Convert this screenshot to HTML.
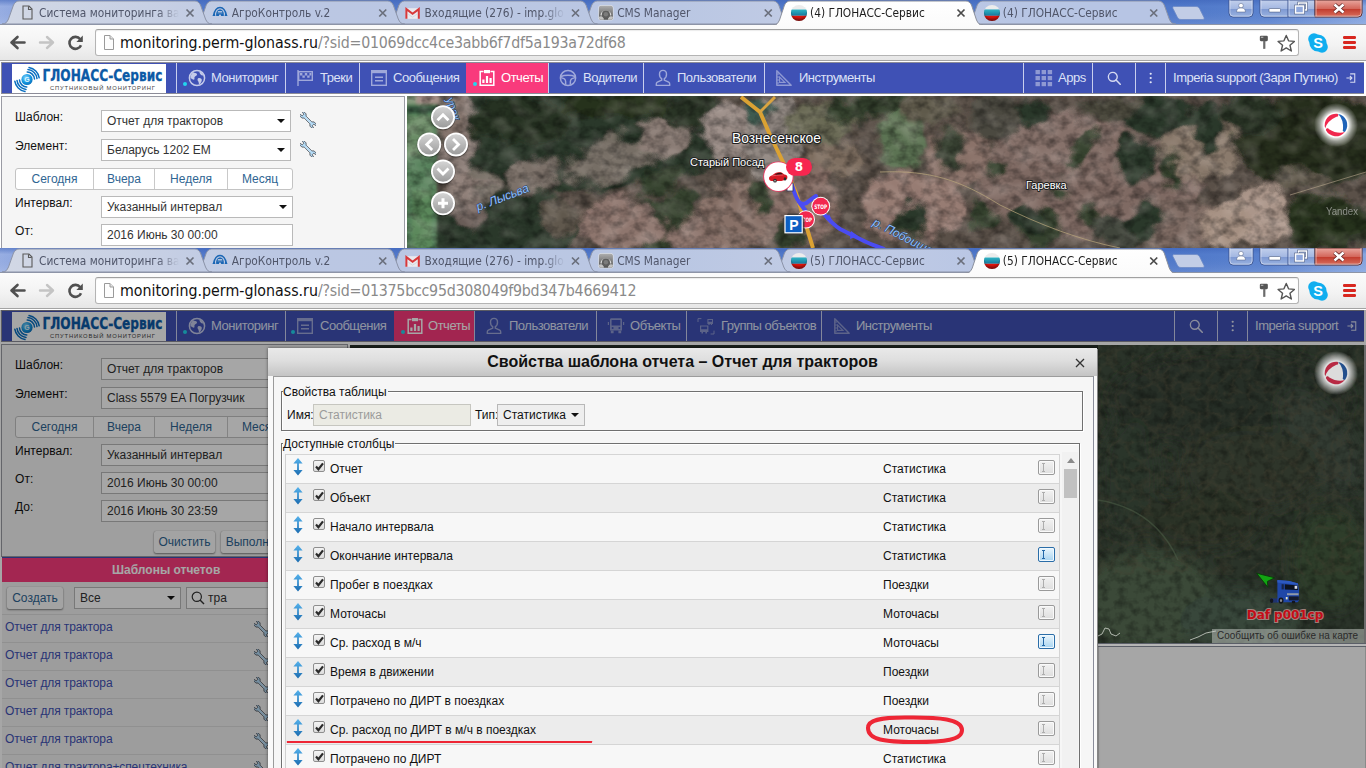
<!DOCTYPE html><html lang="ru"><head><meta charset="utf-8"><title>ГЛОНАСС-Сервис</title><style>

html,body{margin:0;padding:0}
body{width:1366px;height:768px;overflow:hidden;position:relative;background:#fff;font-family:"Liberation Sans",sans-serif}
.ph{position:absolute;left:2px;top:247px;width:403px;height:25px;line-height:24px;background:#fb3b7d;border-top:1px solid #3f51b5;color:#fff;font-weight:bold;font-size:12px;box-sizing:border-box;text-align:left;padding-left:110px}
.ptb{position:absolute;left:2px;top:272px;width:403px;height:32px;background:#f2f2f2}
.pl{position:absolute;left:2px;top:304px;width:403px;height:160px;background:#f2f2f2}
.li{position:absolute;left:0;width:403px;height:28px;line-height:25px;border-top:1px solid #dedede;box-sizing:border-box;padding-left:3px;color:#3f51b5;font-size:12px;letter-spacing:-.12px;white-space:nowrap}
.ovl{position:absolute;left:0;top:0;width:1366px;height:458px;background:rgba(0,0,0,.35)}
.gray2{position:absolute;left:1098px;top:333px;width:268px;height:125px;background:#a6a6a6;border-top:1px solid #5b5f68;box-sizing:border-box}
.gray2::before{content:"";position:absolute;left:0;top:0;width:268px;height:2px;background:#b5b5b5;border-bottom:1px solid #5b5f68}
.gray2::after{content:"";position:absolute;left:0;top:3px;width:266px;height:130px;border-left:1px solid #909090;border-right:1px solid #8a8a8a}

.win{position:absolute;left:0;width:1366px;height:61px;}
.tabstrip{position:absolute;left:0;top:0;display:block}
.tt{position:absolute;top:5px;height:17px;line-height:17px;font-family:"DejaVu Sans Condensed","DejaVu Sans","Liberation Sans",sans-serif;font-size:11.8px;color:#50566a;white-space:nowrap;overflow:hidden;-webkit-mask-image:linear-gradient(90deg,#000 calc(100% - 22px),transparent);mask-image:linear-gradient(90deg,#000 calc(100% - 22px),transparent)}
.tt.act{color:#1c1c1c}
.tbar{position:absolute;left:0;top:25px;width:1366px;height:35px;background:linear-gradient(#fbfbfb,#f3f3f3 55%,#e6e6e6);border-bottom:1px solid #a3a3a3}
.navb{position:absolute;left:0;top:0}
.url{position:absolute;left:95px;top:4px;width:1202px;height:25px;border:1px solid #b4b4b4;border-top-color:#a0a0a0;border-radius:3px;background:#fff;box-shadow:inset 0 1px 1px rgba(0,0,0,.08)}
.url .pg{position:absolute;left:7px;top:5px}
.url .ut{position:absolute;left:24px;top:0;line-height:25.5px;font-family:"DejaVu Sans Condensed","DejaVu Sans",sans-serif;font-size:15.8px;white-space:nowrap;color:#111}
.url .ur{color:#8a8a8a;letter-spacing:-.24px}
.url .key{position:absolute;left:1163px;top:5px}
.url .star{position:absolute;left:1180.5px;top:3.5px}
.skype{position:absolute;left:1307px;top:7px}
.hamb{position:absolute;left:1343px;top:11px;width:13px}
.hamb i{display:block;height:2.6px;margin-bottom:2.4px;background:#d8271f;border-radius:1.2px}

.app{position:absolute;left:0;width:1366px;background:#fff;overflow:hidden;font-family:"Liberation Sans",sans-serif;font-size:12px;color:#222}
.nav{position:absolute;left:1px;top:0;width:1362px;height:30px;border:1px solid #8c8c98;border-right:none;background:#3f51b5}
.logo{position:absolute;left:10px;top:1px;width:154px;height:29px;background:#fff;overflow:hidden}
.ni{position:absolute;top:0;height:30px;border-left:1px solid #c9cfee;box-sizing:border-box}
.ni.act{background:#f93a7c;border-left-color:#f93a7c}
.ni .ic{position:absolute;top:0;height:30px;display:flex;align-items:center;line-height:0}
.ni .lb{position:absolute;top:0;line-height:30px;font-size:13px;color:#dde1f6;white-space:nowrap;letter-spacing:-.48px}
.ni.act .lb{color:#fff}
.ni .dot{position:absolute;top:19px;width:4px;height:4px;border-radius:2px;background:#23d6ee}
.panel{position:absolute;left:1px;width:404px;border:1px solid #9a9ba4;background:#f5f5f5;box-sizing:border-box}
.lbl{position:absolute;left:13px;height:18px;line-height:18px;font-size:12px;letter-spacing:.06px;color:#111}
.sel{position:absolute;left:99px;height:20px;line-height:20px;border:1px solid #b9b9b9;background:#fff;padding-left:5px;font-size:12px;color:#333;white-space:nowrap;box-sizing:content-box;width:183px}
.sel b{position:absolute;right:5px;top:8px;border:4px solid transparent;border-top:4.5px solid #111;border-bottom:none}
.wr{position:absolute;left:298px}
.bg{position:absolute;left:13px;top:71px;height:20px;border:1px solid #c3c3c3;border-radius:3px;background:#fff;overflow:hidden;white-space:nowrap;font-size:0}
.bg span{display:inline-block;height:20px;line-height:21px;text-align:center;font-size:12px;color:#2f6592;border-left:1px solid #c9c9c9;box-sizing:border-box}
.bg span:first-child{border-left:none}
.btn{position:absolute;height:22px;line-height:22px;text-align:center;font-size:12px;color:#2f6592;background:#fafafa;border-radius:2px;box-shadow:0 1px 2px rgba(0,0,0,.45),0 0 1px rgba(0,0,0,.3)}

.map1{position:absolute;left:407px;top:34px;display:block}
.map2{position:absolute;left:1098px;top:35px;display:block}

.dlg{position:absolute;left:268px;top:38px;width:829px;height:430px;background:#f9f9f9;font-family:"Liberation Sans",sans-serif;font-size:12px;color:#111;box-shadow:0 0 3px rgba(0,0,0,.5)}
.dt{position:absolute;left:0;top:0;width:829px;height:28px;line-height:27px;text-align:center;font-weight:bold;font-size:16px;color:#111;background:linear-gradient(#e9e9e9,#dedede 45%,#c4c4c4);}
.dx{position:absolute;left:807px;top:10px}
.db{position:absolute;left:5px;top:28px;width:819px;height:402px;background:#f6f6f6;border-top:1px solid #9c9c9c;border-left:1px solid #9a9a9a;border-right:1px solid #8a8d9a}
.fs{position:absolute;border:1px solid #707070;box-shadow:inset 1px 1px 0 #fff, 1px 1px 0 #fff;box-sizing:border-box}
.fs>*{transform:translate(1px,1px)}
.fs1{left:7px;top:14px;width:802px;height:40px}
.fs2{left:7px;top:66px;width:799px;height:340px}
.lg{position:absolute;left:0px;top:-9px;height:16px;line-height:16px;background:#f6f6f6;padding:0 1px 0 0;font-size:12px;white-space:nowrap}
.fl{position:absolute;top:12px;line-height:20px;font-size:12px}
.fi{position:absolute;left:30px;top:11px;width:151px;height:20px;line-height:20px;padding-left:5px;background:#ebebe4;border:1px solid #c6c6c0;color:#9b9b9b;font-size:12px;box-sizing:content-box}
.fsel{position:absolute;left:214px;top:11px;width:81px;height:20px;line-height:20px;padding-left:5px;background:#eeeeee;border:1px solid #b8b8b8;font-size:12px;box-sizing:content-box}
.fsel b{position:absolute;right:5px;top:8px;border:4px solid transparent;border-top:4.5px solid #111;border-bottom:none}
.tbl{position:absolute;left:2px;top:9px;width:775px;height:330px;overflow:hidden}
.tbl::after{content:"";position:absolute;left:0;top:0;width:1px;height:100%;background:#d0d0d0}
.rw{position:absolute;left:0;width:775px;border-right:1px solid #d4d4d4;height:29px;background:#f7f7f7;border-top:1px solid #d5d5d5;box-sizing:border-box}
.rw.alt{background:#ececec}
.rw .ar{position:absolute;left:7px;top:2px}
.ck{position:absolute;left:28px;top:5px;width:10px;height:10px;border:1px solid #8e8e8e;border-radius:2px;background:linear-gradient(#f4f4f4,#dcdcdc);line-height:0}
.ck svg{position:absolute;left:1px;top:1px}
.c1{position:absolute;left:45px;top:0;line-height:29px;white-space:nowrap}
.c2{position:absolute;left:598px;top:0;line-height:29px;white-space:nowrap}
.ib{position:absolute;left:753.4px;top:4.6px;width:15px;height:13px;border-radius:2.5px;border:1px solid #9a9a9a;border-radius:2px;background:linear-gradient(#f2f2f2,#dedede);box-shadow:inset 0 0 0 1px #fafafa}
.ib i{position:absolute;left:2.5px;top:2.5px;width:3px;height:6.5px;border-top:1px solid #adadad;border-bottom:1px solid #adadad;background:linear-gradient(90deg,transparent 1px,#adadad 1px,#adadad 2px,transparent 2px)}
.ib.hl{border-color:#2a6da8;background:linear-gradient(#eaf6fd,#a8d4f0);box-shadow:inset 0 0 0 1px #f0f9ff}
.ib.hl i{border-color:#2368a8;background:linear-gradient(90deg,transparent 1px,#2368a8 1px,#2368a8 2px,transparent 2px)}
.sb{position:absolute;left:779px;top:7px;width:16px;height:332px;background:#f1f1f1}
.sb .up{position:absolute;left:4.5px;top:6px;border:4px solid transparent;border-bottom:5px solid #8a8a8a;border-top:none}
.sb .th{position:absolute;left:2px;top:17px;width:13px;height:29px;background:#c1c1c1}
.ann{position:absolute;left:0;top:0;pointer-events:none}

</style></head><body>
<div class="win" style="top:0px">
<svg class="tabstrip" width="1366" height="25" viewBox="0 0 1366 25">
<defs><linearGradient id="abg" x1="0" x2="1" y1="0" y2="0"><stop offset="0" stop-color="#98aee2"/><stop offset="0.012" stop-color="#90a8e0"/><stop offset="0.15" stop-color="#5278c9"/><stop offset="0.86" stop-color="#4f78c9"/><stop offset="0.93" stop-color="#5a82cf"/><stop offset="1" stop-color="#86a5df"/></linearGradient><linearGradient id="abgv" x1="0" x2="0" y1="0" y2="1"><stop offset="0" stop-color="#3c62b8" stop-opacity=".55"/><stop offset=".25" stop-color="#3c62b8" stop-opacity="0"/><stop offset="1" stop-color="#fff" stop-opacity=".12"/></linearGradient><linearGradient id="ati" gradientUnits="userSpaceOnUse" x1="0" x2="1366" y1="0" y2="0"><stop offset="0" stop-color="#d2d8e5"/><stop offset=".12" stop-color="#c6cfe4"/><stop offset=".2" stop-color="#bbc7e3"/><stop offset=".5" stop-color="#bac7e3"/><stop offset=".6" stop-color="#c2cce5"/><stop offset=".75" stop-color="#b7c5e4"/><stop offset="1" stop-color="#b7c5e4"/></linearGradient><linearGradient id="ata" x1="0" x2="0" y1="0" y2="1"><stop offset="0" stop-color="#ffffff"/><stop offset="1" stop-color="#fbfbfb"/></linearGradient><linearGradient id="awb" x1="0" x2="0" y1="0" y2="1"><stop offset="0" stop-color="#c3d0ec"/><stop offset=".5" stop-color="#a4b8e2"/><stop offset=".52" stop-color="#7d98d2"/><stop offset="1" stop-color="#9bb3e0"/></linearGradient><linearGradient id="awc" x1="0" x2="0" y1="0" y2="1"><stop offset="0" stop-color="#e9a79f"/><stop offset=".5" stop-color="#d4685c"/><stop offset=".52" stop-color="#c13a2c"/><stop offset="1" stop-color="#d8705f"/></linearGradient></defs>
<rect width="1366" height="25" fill="url(#abg)"/><rect width="1366" height="25" fill="url(#abgv)"/>
<rect y="24" width="1366" height="1" fill="#8e95a6"/>
<path d="M965.75,24 C969.75,24 970.75,22 972.25,19 L977.25,5 C978.75,2.5 980.25,1 982.75,1 L1158.75,1 C1161.25,1 1162.75,2.5 1164.25,5 L1169.25,19 C1170.75,22 1171.75,24 1175.75,24 Z" fill="url(#ati)" stroke="#8b93a8" stroke-width="1"/>
<path d="M580.25,24 C584.25,24 585.25,22 586.75,19 L591.75,5 C593.25,2.5 594.75,1 597.25,1 L773.25,1 C775.75,1 777.25,2.5 778.75,5 L783.75,19 C785.25,22 786.25,24 790.25,24 Z" fill="url(#ati)" stroke="#8b93a8" stroke-width="1"/>
<path d="M387.5,24 C391.5,24 392.5,22 394.0,19 L399.0,5 C400.5,2.5 402.0,1 404.5,1 L580.5,1 C583.0,1 584.5,2.5 586.0,5 L591.0,19 C592.5,22 593.5,24 597.5,24 Z" fill="url(#ati)" stroke="#8b93a8" stroke-width="1"/>
<path d="M194.75,24 C198.75,24 199.75,22 201.25,19 L206.25,5 C207.75,2.5 209.25,1 211.75,1 L387.75,1 C390.25,1 391.75,2.5 393.25,5 L398.25,19 C399.75,22 400.75,24 404.75,24 Z" fill="url(#ati)" stroke="#8b93a8" stroke-width="1"/>
<path d="M2.0,24 C6.0,24 7.0,22 8.5,19 L13.5,5 C15.0,2.5 16.5,1 19.0,1 L195.0,1 C197.5,1 199.0,2.5 200.5,5 L205.5,19 C207.0,22 208.0,24 212.0,24 Z" fill="url(#ati)" stroke="#8b93a8" stroke-width="1"/>
<path d="M773.0,25 C777.0,25 778.0,23 779.5,20 L784.5,5 C786.0,2.5 787.5,1 790.0,1 L966.0,1 C968.5,1 970.0,2.5 971.5,5 L976.5,20 C978.0,23 979.0,25 983.0,25 Z" fill="url(#ata)" stroke="#8a8f9c" stroke-width="1"/>
<rect x="777.0" y="24" width="202" height="1.2" fill="#fbfbfb"/>
<g transform="translate(21.5,5.5)"><path d="M1.5,0.5 H7.5 L10.5,3.5 V13.5 H1.5 Z" fill="none" stroke="#5a5a5a" stroke-width="1.1"/><path d="M7,0.8 V4 H10.2" fill="none" stroke="#5a5a5a" stroke-width="1.1"/></g>
<path d="M186.5,9.5 l7,7 M193.5,9.5 l-7,7" stroke="#6a6f7c" stroke-width="1.7" fill="none"/>
<g transform="translate(212,4)"><path d="M1.6,11.4 C2.6,6.4 4.8,3.4 8,3.4 C11.2,3.4 13.4,6.4 14.4,11.4" fill="none" stroke="#1a66b4" stroke-width="1.5"/><path d="M0.2,12 L2.8,9.6 L3.4,12 Z M15.8,12 L13.200,9.6 L12.600,12 Z" fill="#1a66b4"/><path d="M4.200,12 C3.800,8.200 5.400,5.600 8,5.600 C10.600,5.600 12.200,8.200 11.800,12 L9.200,12 L8.600,10.600 L7.400,10.600 L6.800,12 Z" fill="#1a66b4"/><path d="M5.800,7.700 h4.400" stroke="#c9d2e6" stroke-width="1.100"/><path d="M5.600,9.100 C7,8.700 9,8.700 10.400,9.100" stroke="#c9d2e6" stroke-width=".5" fill="none"/></g>
<path d="M379.25,9.5 l7,7 M386.25,9.5 l-7,7" stroke="#6a6f7c" stroke-width="1.7" fill="none"/>
<g transform="translate(405.3,7.8)"><rect x="0.6" y="0.4" width="13.4" height="10.6" fill="#e9e9ee"/><path d="M3,6.500 L7.300,9.400 L11.600,6.500" fill="none" stroke="#d0d0d8" stroke-width=".8"/><path d="M1.100,11 V1.300 L7.300,6 L13.500,1.300 V11" fill="none" stroke="#d8383a" stroke-width="2" stroke-linejoin="miter"/></g>
<path d="M572.0,9.5 l7,7 M579.0,9.5 l-7,7" stroke="#6a6f7c" stroke-width="1.7" fill="none"/>
<g transform="translate(598.4,5.300)"><defs><linearGradient id="cg597" x1="0" x2="0" y1="0" y2="1"><stop offset="0" stop-color="#adadad"/><stop offset="1" stop-color="#4e4e4e"/></linearGradient><clipPath id="cc597"><rect x="0.500" y="0.500" width="14" height="14" rx="2"/></clipPath></defs><rect x="0" y="0" width="15" height="15" rx="2.600" fill="#f2f2f2" opacity=".8"/><rect x="0.500" y="0.500" width="14" height="14" rx="2" fill="url(#cg597)"/><g clip-path="url(#cc597)"><circle cx="2.400" cy="14" r="3" fill="#c4c4c4"/><circle cx="12.600" cy="14" r="3" fill="#c4c4c4"/><path d="M2.600,10 A5,5 0 0 1 12.400,10" fill="none" stroke="#d6d6d6" stroke-width="1.400"/><circle cx="7.500" cy="9.200" r="4" fill="#5e5e5e"/><circle cx="7.500" cy="9" r="2.200" fill="#7c7c7c"/></g></g>
<path d="M764.75,9.5 l7,7 M771.75,9.5 l-7,7" stroke="#6a6f7c" stroke-width="1.7" fill="none"/>
<g transform="translate(790.9,4.900)"><defs><clipPath id="fc790"><circle cx="8.100" cy="8.100" r="8.100"/></clipPath><radialGradient id="fs790" cx=".5" cy=".35" r=".7"><stop offset=".6" stop-color="#000" stop-opacity="0"/><stop offset="1" stop-color="#000" stop-opacity=".38"/></radialGradient><linearGradient id="fb790" x1="0" x2="0" y1="0" y2="1"><stop offset="0" stop-color="#2fb4c4"/><stop offset="1" stop-color="#16789c"/></linearGradient><linearGradient id="fr790" x1="0" x2="0" y1="0" y2="1"><stop offset="0" stop-color="#e8140a"/><stop offset="1" stop-color="#9c1010"/></linearGradient></defs><g clip-path="url(#fc790)"><rect width="16.200" height="4.600" fill="#ececec"/><rect y="4.600" width="16.200" height="6.300" fill="url(#fb790)"/><rect y="10.900" width="16.200" height="5.400" fill="url(#fr790)"/><rect width="16.200" height="16.200" fill="url(#fs790)"/></g></g>
<path d="M957.5,9.5 l7,7 M964.5,9.5 l-7,7" stroke="#4a4a4a" stroke-width="1.7" fill="none"/>
<g transform="translate(983.9,4.900)"><defs><clipPath id="fc983"><circle cx="8.100" cy="8.100" r="8.100"/></clipPath><radialGradient id="fs983" cx=".5" cy=".35" r=".7"><stop offset=".6" stop-color="#000" stop-opacity="0"/><stop offset="1" stop-color="#000" stop-opacity=".38"/></radialGradient><linearGradient id="fb983" x1="0" x2="0" y1="0" y2="1"><stop offset="0" stop-color="#2fb4c4"/><stop offset="1" stop-color="#16789c"/></linearGradient><linearGradient id="fr983" x1="0" x2="0" y1="0" y2="1"><stop offset="0" stop-color="#e8140a"/><stop offset="1" stop-color="#9c1010"/></linearGradient></defs><g clip-path="url(#fc983)"><rect width="16.200" height="4.600" fill="#ececec"/><rect y="4.600" width="16.200" height="6.300" fill="url(#fb983)"/><rect y="10.900" width="16.200" height="5.400" fill="url(#fr983)"/><rect width="16.200" height="16.200" fill="url(#fs983)"/></g></g>
<path d="M1150.25,9.5 l7,7 M1157.25,9.5 l-7,7" stroke="#6a6f7c" stroke-width="1.7" fill="none"/>
<path d="M1174,6.5 H1196 C1198,6.5 1199,7.5 1200,9.5 L1204,17.5 C1204.5,19 1204,19.5 1202,19.5 H1181 C1179,19.5 1178,18.5 1177,16.5 L1173,8.5 C1172.5,7 1173,6.5 1174,6.5 Z" fill="#c2cde6" stroke="#6d8ac6" stroke-width=".8"/>
<path d="M1229,0 V13 a4,4 0 0 0 4,4 H1249 a4,4 0 0 0 4,-4 V0 Z" fill="url(#awb)" stroke="#3c5590" stroke-width="1"/>
<path d="M1229.9,0 V13 a3.2,3.2 0 0 0 3.2,3.2 H1248.9 a3.2,3.2 0 0 0 3.2,-3.2 V0" fill="none" stroke="#e4ebfa" stroke-opacity=".8" stroke-width=".8"/>
<circle cx="1241" cy="5.6" r="2.3" fill="#fff" stroke="#4a5a80" stroke-width=".5"/><path d="M1236.6,12 c0,-3.4 2,-4 4.4,-4 s4.4,.6 4.4,4 z" fill="#fff" stroke="#4a5a80" stroke-width=".5"/>
<path d="M1260,0 V13 a4,4 0 0 0 4,4 H1315 V0 Z" fill="url(#awb)" stroke="#3c5590" stroke-width="1"/>
<path d="M1315,0 V17 H1358 a4,4 0 0 0 4,-4 V0 Z" fill="url(#awc)" stroke="#5a2a2a" stroke-width="1"/>
<path d="M1260.9,0 V13 a3.2,3.2 0 0 0 3.2,3.2 H1357.9 a3.2,3.2 0 0 0 3.2,-3.2 V0" fill="none" stroke="#eef2fb" stroke-opacity=".75" stroke-width=".8"/>
<path d="M1288,0 V17" stroke="#3c5590" stroke-width="1"/><path d="M1289,0 V16" stroke="#e4ebfa" stroke-opacity=".6" stroke-width="1"/><path d="M1316,0 V16" stroke="#f4d0cc" stroke-opacity=".7" stroke-width="1"/>
<rect x="1269" y="8.5" width="11.5" height="3.6" rx=".8" fill="#fff" stroke="#4a5a80" stroke-width=".6"/>
<rect x="1298.5" y="3" width="8" height="7" fill="none" stroke="#4a5a80" stroke-width="2.6"/><rect x="1298.5" y="3" width="8" height="7" fill="none" stroke="#fff" stroke-width="1.5"/><rect x="1295.5" y="6" width="8" height="7" fill="#8fa8dc" stroke="#4a5a80" stroke-width="2.6"/><rect x="1295.5" y="6" width="8" height="7" fill="#8fa8dc" stroke="#fff" stroke-width="1.5"/>
<path d="M1334.5,4.5 l9,8 M1343.5,4.5 l-9,8" stroke="#5a2020" stroke-width="4" fill="none"/><path d="M1334.5,4.5 l9,8 M1343.5,4.5 l-9,8" stroke="#fff" stroke-width="2.6" fill="none"/>
</svg>
<div class="tt" style="left:39.0px;width:140px">Система мониторинга ва</div>
<div class="tt" style="left:231.8px;width:140px">АгроКонтроль v.2</div>
<div class="tt" style="left:424.5px;width:140px">Входящие (276) - imp.glo</div>
<div class="tt" style="left:617.2px;width:140px">CMS Manager</div>
<div class="tt act" style="left:810.0px;width:140px">(4) ГЛОНАСС-Сервис</div>
<div class="tt" style="left:1002.8px;width:140px">(4) ГЛОНАСС-Сервис</div>
<div class="tbar">
<svg class="navb" width="95" height="36" viewBox="0 0 95 36"><path d="M24.5,17.5 H12.5 M17.5,12 L11.5,17.5 L17.5,23" fill="none" stroke="#505050" stroke-width="2.6" stroke-linecap="round" stroke-linejoin="round"/><path d="M40,17.5 H52 M47,12 L53,17.5 L47,23" fill="none" stroke="#c4c4c4" stroke-width="2.4" stroke-linecap="round" stroke-linejoin="round"/><path d="M80.2,14.2 A6,6 0 1 0 81,20.2" fill="none" stroke="#505050" stroke-width="2.6"/><path d="M82.8,10.6 V17 H76.4 Z" fill="#505050"/></svg>
<div class="url"><svg width="12" height="15" viewBox="0 0 12 15" class="pg"><path d="M1.5,0.5 H7 L10.5,4 V14.5 H1.5 Z" fill="#fdfdfd" stroke="#9a9a9a"/><path d="M7,0.5 V4 H10.5" fill="#e4e4e4" stroke="#9a9a9a"/></svg><span class="ut">monitoring.perm-glonass.ru<span class="ur">/?sid=01069dcc4ce3abb6f7df5a193a72df68</span></span><svg class="key" width="10" height="15" viewBox="0 0 12 18"><rect x="1" y="1" width="9.6" height="6.4" rx="1.4" fill="#555"/><rect x="2.2" y="2" width="3" height="1.6" fill="#aaa"/><rect x="5" y="7" width="2.6" height="9.5" fill="#555"/><rect x="5.4" y="7" width="1" height="9" fill="#999"/></svg><svg class="star" width="18.5" height="18.5" viewBox="0 0 20 20"><path d="M10,1.6 L12.5,7.4 L18.8,8 L14,12.2 L15.5,18.4 L10,15.1 L4.5,18.4 L6,12.2 L1.2,8 L7.5,7.4 Z" fill="#fff" stroke="#555" stroke-width="1.5" stroke-linejoin="round"/></svg></div>
<svg class="skype" width="22" height="22" viewBox="0 0 22 22"><circle cx="7" cy="7" r="5.8" fill="#10aeef"/><circle cx="15" cy="15" r="5.8" fill="#10aeef"/><circle cx="11" cy="11" r="8.6" fill="#10aeef"/><text x="11" y="16.2" text-anchor="middle" font-family="Liberation Sans, sans-serif" font-weight="bold" font-size="14.5" fill="#fff">S</text></svg>
<div class="hamb"><i></i><i></i><i></i></div>
</div>
</div>
<div class="app" style="top:62px;height:186px">
<div class="nav">
<div class="logo"><svg width="154" height="29" viewBox="0 0 154 29"><defs><radialGradient id="lg" cx=".4" cy=".35" r=".7"><stop offset="0" stop-color="#7fd4ff"/><stop offset=".6" stop-color="#1597e0"/><stop offset="1" stop-color="#0a6cb8"/></radialGradient></defs><circle cx="15" cy="15.5" r="5.6" fill="url(#lg)"/><text x="15" y="18.4" text-anchor="middle" font-family="Liberation Sans,sans-serif" font-weight="bold" font-size="7" fill="#dff4ff">G</text><g fill="none" stroke="#0b6fc0" stroke-width="1.5" stroke-linecap="round"><path d="M15.2,8 a7.5,7.5 0 0 1 7.3,7"/><path d="M16,5.6 a10,10 0 0 1 9,9"/><path d="M17,3.4 a12.4,12.4 0 0 1 10.2,10.4"/><path d="M14.8,23 a7.5,7.5 0 0 1 -7.3,-7"/><path d="M14,25.4 a10,10 0 0 1 -9,-9"/><path d="M13,27.6 a12.4,12.4 0 0 1 -10.2,-10.4"/></g><text x="30.5" y="16.6" font-family="DejaVu Sans Condensed,DejaVu Sans,Liberation Sans,sans-serif" font-weight="bold" font-size="16" fill="#0b5aa6" stroke="#0b5aa6" stroke-width=".3" textLength="120" lengthAdjust="spacingAndGlyphs">ГЛОНАСС-Сервис</text><text x="38" y="25.6" font-family="Liberation Sans,sans-serif" font-size="5.8" fill="#444" textLength="105" lengthAdjust="spacing">СПУТНИКОВЫЙ МОНИТОРИНГ</text></svg></div>
<div class="ni" style="left:174px;width:109px">
<i class="dot" style="left:5.5px"></i>
<span class="ic" style="left:10.5px"><svg width="18" height="18" viewBox="0 0 18 18"><circle cx="9" cy="9" r="7.6" fill="none" stroke="#c5cbea" stroke-width="1.5"/><path d="M5,3.2 C6.5,4 8.4,3.6 9,5.2 C9.4,6.6 7.4,6.8 6.6,8 C6,9 7,10 6.2,10.6 C5.2,11.2 3.6,9.4 2.4,9.2 C2.6,6.6 3.4,4.6 5,3.2 Z M10.6,9 C12,8.6 13.6,9.4 13.8,10.8 C14,12.4 12.6,14.4 11.2,15.4 C10.6,14 10.8,13 10,12 C9.2,11 9.4,9.4 10.6,9 Z M11.6,2.6 C13,3.2 14.6,4.6 15.4,6.4 C14.2,6.6 13.2,6.2 12.4,5.2 C11.8,4.4 11.2,3.6 11.6,2.6 Z" fill="#c5cbea"/></svg></span>
<span class="lb" style="left:34px;width:68px">Мониторинг</span>
</div>
<div class="ni" style="left:283px;width:74px">
<span class="ic" style="left:9.5px"><svg width="18" height="18" viewBox="0 0 18 18"><path d="M2,1 V17" stroke="#9fa8da" stroke-width="1.4"/><rect x="2.7" y="2.7" width="13.6" height="8.6" fill="none" stroke="#9fa8da" stroke-width="1.4"/><path d="M4,4h2.4v2.4H4zM8.8,4h2.4v2.4H8.8zM13.4,4h2v2.4h-2zM6.4,6.4h2.4v2.4H6.4zM11.2,6.4h2.4v2.4h-2.4z" fill="#9fa8da"/></svg></span>
<span class="lb" style="left:34px;width:31px">Треки</span>
</div>
<div class="ni" style="left:357px;width:107px">
<span class="ic" style="left:9.5px"><svg width="18" height="18" viewBox="0 0 18 18"><rect x="1.7" y="1.7" width="14.6" height="14.6" fill="none" stroke="#9fa8da" stroke-width="1.4"/><path d="M1.7,3h14.6" stroke="#9fa8da" stroke-width="2.4"/><path d="M5,8.2h8M5,11.8h8" stroke="#9fa8da" stroke-width="1.4"/></svg></span>
<span class="lb" style="left:33px;width:67px">Сообщения</span>
</div>
<div class="ni act" style="left:464px;width:82px">
<i class="dot" style="left:5.5px"></i>
<span class="ic" style="left:10.5px"><svg width="18" height="18" viewBox="0 0 18 18"><path d="M5.5,2.5 H2.2 V16.3 H15.8 V2.5 H12.5" fill="none" stroke="#fff" stroke-width="1.5"/><rect x="6" y="1" width="6" height="3.2" fill="#fff"/><path d="M5.4,14 V10.4 M9,14 V7 M12.6,14 V9" stroke="#fff" stroke-width="2.2"/></svg></span>
<span class="lb" style="left:34px;width:40px">Отчеты</span>
</div>
<div class="ni" style="left:546px;width:95px">
<span class="ic" style="left:9.5px"><svg width="18" height="18" viewBox="0 0 18 18"><circle cx="9" cy="9" r="7.6" fill="none" stroke="#9fa8da" stroke-width="1.5"/><path d="M2,7.6 C5,5.8 13,5.8 16,7.6 M6.6,15.6 C6.8,12 7.2,10.6 5,9.6 L2,8.6 M11.4,15.6 C11.2,12 10.8,10.6 13,9.6 L16,8.6" fill="none" stroke="#9fa8da" stroke-width="1.4"/></svg></span>
<span class="lb" style="left:34px;width:53px">Водители</span>
</div>
<div class="ni" style="left:641px;width:121px">
<span class="ic" style="left:9.5px"><svg width="18" height="18" viewBox="0 0 18 18"><path d="M9,1.4 c2.2,0 3.5,1.6 3.5,3.8 c0,2 -1,3.8 -2.2,4.4 v1.6 l4.4,2 c.8,.4 1,1 1,1.8 v1.4 H2.3 v-1.4 c0,-.8 .2,-1.4 1,-1.8 l4.4,-2 v-1.6 c-1.2,-.6 -2.2,-2.4 -2.2,-4.4 c0,-2.2 1.3,-3.8 3.5,-3.8z" fill="none" stroke="#9fa8da" stroke-width="1.4" stroke-linejoin="round"/></svg></span>
<span class="lb" style="left:33px;width:80px">Пользователи</span>
</div>
<div class="ni" style="left:762px;width:259px">
<span class="ic" style="left:9.5px"><svg width="18" height="18" viewBox="0 0 18 18"><path d="M1.8,1.8 V16.2 H16.2 Z" fill="none" stroke="#8f99d3" stroke-width="1.4" stroke-linejoin="round"/><path d="M4.6,8 V13.4 H10 Z" fill="none" stroke="#8f99d3" stroke-width="1.1"/><path d="M2,5h2M2,8h2M2,11h2M2,14h2" stroke="#8f99d3" stroke-width="1"/></svg></span>
<span class="lb" style="left:34px;width:74px">Инструменты</span>
</div>
<div class="ni" style="left:1021px;width:69px">
<span class="ic" style="left:10.5px"><svg width="18" height="18" viewBox="0 0 18 18"><g fill="#8f99d3"><rect x="0.5" y="1" width="4.4" height="4.2"/><rect x="6.6" y="1" width="4.4" height="4.2"/><rect x="12.7" y="1" width="4.4" height="4.2"/><rect x="0.5" y="7" width="4.4" height="4.2"/><rect x="6.6" y="7" width="4.4" height="4.2"/><rect x="12.7" y="7" width="4.4" height="4.2"/><rect x="0.5" y="13" width="4.4" height="4.2"/><rect x="6.6" y="13" width="4.4" height="4.2"/><rect x="12.7" y="13" width="4.4" height="4.2"/></g></svg></span>
<span class="lb" style="left:34px;width:28px">Apps</span>
</div>
<div class="ni" style="left:1090px;width:43px">
<span class="ic" style="left:13.5px"><svg width="14.5" height="14.5" viewBox="0 0 16 16"><circle cx="6.4" cy="6.4" r="4.9" fill="none" stroke="#d5d9f0" stroke-width="1.5"/><path d="M10,10 L14.6,14.6" stroke="#d5d9f0" stroke-width="1.7" stroke-linecap="round"/></svg></span>
</div>
<div class="ni" style="left:1133px;width:30px">
<span class="ic" style="left:13.0px"><svg width="3.4" height="12" viewBox="0 0 4 14"><circle cx="2" cy="2" r="1.3" fill="#e4e7f6"/><circle cx="2" cy="7" r="1.3" fill="#e4e7f6"/><circle cx="2" cy="12" r="1.3" fill="#e4e7f6"/></svg></span>
</div>
<div class="ni" style="left:1163px;width:199px">
<span class="ic" style="left:179.5px"><svg width="10" height="10" viewBox="0 0 11 12"><path d="M4.5,1 H10 V11 H4.5" fill="none" stroke="#d5d9f0" stroke-width="1.3"/><path d="M0,6 H6.5 M4.2,3.6 L6.6,6 L4.2,8.4" fill="none" stroke="#d5d9f0" stroke-width="1.3"/></svg></span>
<span class="lb" style="left:7px;width:166px">Imperia support (Заря Путино)</span>
</div>
</div>
<div class="panel" style="top:34px;height:160px">
<div class="lbl" style="top:10.5px">Шаблон:</div><div class="sel" style="top:13px;width:183px">Отчет для тракторов<b></b></div><svg class="wr" style="top:14.5px" width="16" height="16" viewBox="-9 -9 18 18"><g transform="rotate(-45)"><path d="M-1.5,-4.6 L-3.3,-6.4 V-10 L-1.7,-10.6 L-1.3,-7.9 H1.3 L1.7,-10.6 L3.3,-10 V-6.4 L1.5,-4.6 V4.6 L3.3,6.4 V10 L1.7,10.6 L1.3,7.9 H-1.3 L-1.7,10.6 L-3.3,10 V6.4 L-1.5,4.6 Z" fill="#b5dcf7" stroke="#5a5f66" stroke-width="1" stroke-linejoin="round"/><path d="M-1,-3.4h2M-1,-1.7h2M-1,0h2M-1,1.7h2M-1,3.4h2" stroke="#e6f4fd" stroke-width=".7"/></g></svg>
<div class="lbl" style="top:39.5px">Элемент:</div><div class="sel" style="top:42px;width:183px">Беларусь 1202 ЕМ<b></b></div><svg class="wr" style="top:43.5px" width="16" height="16" viewBox="-9 -9 18 18"><g transform="rotate(-45)"><path d="M-1.5,-4.6 L-3.3,-6.4 V-10 L-1.7,-10.6 L-1.3,-7.9 H1.3 L1.7,-10.6 L3.3,-10 V-6.4 L1.5,-4.6 V4.6 L3.3,6.4 V10 L1.7,10.6 L1.3,7.9 H-1.3 L-1.7,10.6 L-3.3,10 V6.4 L-1.5,4.6 Z" fill="#b5dcf7" stroke="#5a5f66" stroke-width="1" stroke-linejoin="round"/><path d="M-1,-3.4h2M-1,-1.7h2M-1,0h2M-1,1.7h2M-1,3.4h2" stroke="#e6f4fd" stroke-width=".7"/></g></svg>
<div class="bg"><span style="width:77px">Сегодня</span><span style="width:61px">Вчера</span><span style="width:73px">Неделя</span><span style="width:65px">Месяц</span></div>
<div class="lbl" style="top:96.5px">Интервал:</div><div class="sel" style="top:99px;width:185px">Указанный интервал<b></b></div>
<div class="lbl" style="top:124.5px">От:</div><div class="sel inp" style="top:127px;width:185px">2016 Июнь 30 00:00</div>
</div>
<svg class="map1" width="959" height="152" viewBox="407 96 959 152">
<defs><filter id="m1b" x="-5%" y="-5%" width="110%" height="110%"><feGaussianBlur stdDeviation="2.2" result="b"/><feTurbulence type="fractalNoise" baseFrequency="0.035 0.045" numOctaves="3" seed="11" result="t"/><feDisplacementMap in="b" in2="t" scale="26" xChannelSelector="R" yChannelSelector="G"/></filter><filter id="m1n" x="0" y="0" width="100%" height="100%"><feTurbulence type="fractalNoise" baseFrequency="0.09 0.11" numOctaves="3" seed="7"/><feColorMatrix type="matrix" values="0 0 0 0 0  0 0 0 0 0  0 0 0 0 0  1.6 0 0 0 -0.62"/></filter><filter id="m1c" x="-20%" y="-5%" width="140%" height="110%"><feGaussianBlur stdDeviation="1.6"/></filter><linearGradient id="pang" x1="0" x2="0" y1="0" y2="1"><stop offset="0" stop-color="#d4d4d4"/><stop offset="1" stop-color="#9c9c9c"/></linearGradient><radialGradient id="yg0"><stop offset=".55" stop-color="#fff" stop-opacity=".95"/><stop offset=".75" stop-color="#fff" stop-opacity=".45"/><stop offset="1" stop-color="#fff" stop-opacity="0"/></radialGradient><filter id="m1n2" x="0" y="0" width="100%" height="100%"><feTurbulence type="fractalNoise" baseFrequency="0.05 0.06" numOctaves="2" seed="21"/><feColorMatrix type="matrix" values="0 0 0 0 1  0 0 0 0 .9  0 0 0 0 .85  0 1.5 0 0 -0.62"/></filter></defs>
<rect x="407" y="96" width="959" height="152" fill="#5a5048"/>
<g filter="url(#m1b)">
<ellipse cx="570" cy="130" rx="170" ry="60" fill="#2b3829"/>
<ellipse cx="500" cy="225" rx="80" ry="40" fill="#2b3829"/>
<ellipse cx="640" cy="230" rx="40" ry="30" fill="#34422f"/>
<ellipse cx="458" cy="140" rx="18" ry="60" fill="#8a7b76"/>
<ellipse cx="470" cy="215" rx="14" ry="20" fill="#6a5d58"/>
<ellipse cx="470" cy="190" rx="28" ry="22" fill="#908079" transform="rotate(-20 470 190)" opacity="0.75"/>
<ellipse cx="450" cy="120" rx="18" ry="30" fill="#7f7068" opacity="0.8"/>
<ellipse cx="530" cy="175" rx="30" ry="14" fill="#908079" transform="rotate(-15 530 175)" opacity="0.8"/>
<ellipse cx="610" cy="160" rx="46" ry="20" fill="#908079" transform="rotate(-15 610 160)" opacity="0.75"/>
<ellipse cx="665" cy="135" rx="30" ry="18" fill="#908079" transform="rotate(-20 665 135)" opacity="0.9"/>
<ellipse cx="560" cy="215" rx="20" ry="18" fill="#6f6058" opacity="0.8"/>
<ellipse cx="520" cy="120" rx="50" ry="22" fill="#263224"/>
<ellipse cx="620" cy="105" rx="60" ry="14" fill="#27331f"/>
<ellipse cx="700" cy="112" rx="40" ry="16" fill="#2a3627"/>
<ellipse cx="620" cy="225" rx="40" ry="28" fill="#8e766e"/>
<ellipse cx="700" cy="235" rx="40" ry="20" fill="#8e766e"/>
<ellipse cx="745" cy="215" rx="40" ry="35" fill="#887168"/>
<ellipse cx="680" cy="205" rx="18" ry="18" fill="#34422f"/>
<ellipse cx="660" cy="180" rx="25" ry="12" fill="#34422f" transform="rotate(-30 660 180)"/>
<ellipse cx="730" cy="130" rx="28" ry="30" fill="#9a8c86"/>
<ellipse cx="775" cy="140" rx="28" ry="45" fill="#8e857f"/>
<ellipse cx="760" cy="110" rx="12" ry="14" fill="#3d5a50"/>
<ellipse cx="820" cy="125" rx="35" ry="22" fill="#6b6a54"/>
<ellipse cx="850" cy="110" rx="25" ry="12" fill="#34422f"/>
<ellipse cx="835" cy="160" rx="30" ry="14" fill="#7e6e60"/>
<ellipse cx="800" cy="205" rx="40" ry="40" fill="#866e66"/>
<ellipse cx="760" cy="195" rx="14" ry="14" fill="#34422f"/>
<ellipse cx="790" cy="235" rx="16" ry="12" fill="#34422f"/>
<ellipse cx="902" cy="140" rx="24" ry="28" fill="#5b7352"/>
<ellipse cx="880" cy="105" rx="30" ry="10" fill="#34422f"/>
<ellipse cx="930" cy="110" rx="30" ry="14" fill="#5f5a4c"/>
<ellipse cx="910" cy="205" rx="50" ry="35" fill="#977b73"/>
<ellipse cx="912" cy="222" rx="18" ry="16" fill="#2f3a2b"/>
<ellipse cx="960" cy="160" rx="35" ry="30" fill="#8a7269"/>
<ellipse cx="985" cy="215" rx="18" ry="14" fill="#34422f"/>
<ellipse cx="1000" cy="120" rx="30" ry="25" fill="#4c4a40"/>
<ellipse cx="1090" cy="180" rx="110" ry="60" fill="#7f6b63"/>
<ellipse cx="1060" cy="140" rx="50" ry="25" fill="#86716a"/>
<ellipse cx="1035" cy="112" rx="16" ry="14" fill="#2b3829"/>
<ellipse cx="1140" cy="160" rx="22" ry="20" fill="#2b3829"/>
<ellipse cx="1165" cy="120" rx="40" ry="18" fill="#2b3829"/>
<ellipse cx="1120" cy="108" rx="40" ry="10" fill="#4b4a3e"/>
<ellipse cx="1200" cy="150" rx="40" ry="30" fill="#8a7a6c"/>
<ellipse cx="1180" cy="225" rx="50" ry="25" fill="#7d6a62"/>
<ellipse cx="1120" cy="230" rx="30" ry="16" fill="#40453a"/>
<ellipse cx="1040" cy="228" rx="22" ry="14" fill="#34422f"/>
<ellipse cx="1310" cy="140" rx="70" ry="50" fill="#252f1f"/>
<ellipse cx="1250" cy="115" rx="30" ry="22" fill="#2a3425"/>
<ellipse cx="1340" cy="225" rx="40" ry="25" fill="#2a3324"/>
<ellipse cx="1031" cy="113" rx="10" ry="16" fill="#2b3829"/>
<ellipse cx="1150" cy="116" rx="15" ry="20" fill="#2b3829"/>
<ellipse cx="1132" cy="159" rx="17" ry="23" fill="#2b3829"/>
<ellipse cx="1207" cy="127" rx="14" ry="27" fill="#2b3829"/>
<ellipse cx="1173" cy="171" rx="6" ry="21" fill="#34422f"/>
<ellipse cx="1145" cy="221" rx="16" ry="21" fill="#2b3829"/>
<ellipse cx="1026" cy="219" rx="14" ry="12" fill="#2b3829"/>
<ellipse cx="992" cy="170" rx="9" ry="9" fill="#34422f"/>
<ellipse cx="915" cy="216" rx="14" ry="16" fill="#2b3829"/>
<ellipse cx="950" cy="152" rx="14" ry="20" fill="#3a4434"/>
<ellipse cx="1080" cy="150" rx="10" ry="25" fill="#34422f" transform="rotate(30 1080 150)"/>
<ellipse cx="1090" cy="215" rx="12" ry="10" fill="#34422f"/>
<ellipse cx="1060" cy="190" rx="10" ry="8" fill="#34422f"/>
<ellipse cx="1325" cy="222" rx="42" ry="26" fill="#27311f"/>
<ellipse cx="1262" cy="215" rx="28" ry="32" fill="#ab968a"/>
<ellipse cx="1225" cy="225" rx="25" ry="22" fill="#a59082"/>
<ellipse cx="1300" cy="180" rx="30" ry="10" fill="#5d5648"/>
</g>
<g filter="url(#m1c)"><rect x="400" y="90" width="37" height="170" fill="#55805a"/><rect x="400" y="90" width="20" height="14" fill="#84987c"/><rect x="416" y="92" width="24" height="12" fill="#a08c84"/><rect x="407" y="106" width="30" height="7" fill="#33503a"/><rect x="407" y="116" width="26" height="40" fill="#6a8c66"/><rect x="412" y="190" width="20" height="60" fill="#5a875a"/></g>
<rect x="407" y="96" width="959" height="152" fill="#10160c" filter="url(#m1n)" opacity=".55"/>
<rect x="407" y="96" width="959" height="152" filter="url(#m1n2)" opacity=".28"/>
<path d="M741,97 L760,112 L770,135 L783,162 L796,193 L805,222 L813,248" fill="none" stroke="#dba233" stroke-width="4"/>
<path d="M760,112 L775,97" fill="none" stroke="#d9a441" stroke-width="3"/>
<path d="M880,172 C930,170 960,180 1000,205 C1040,225 1080,240 1120,248" fill="none" stroke="#b9a77c" stroke-width="1" opacity=".7"/>
<path d="M1290,195 L1366,172" fill="none" stroke="#b5a58c" stroke-width="1" opacity=".6"/>
<path d="M792,185 C794,192 796,198 799,202 C802,205 806,204 809,201 L816,196 M799,202 L805,210 M824,214 C829,220 834,225 840,229 C848,233 856,237 864,241 C870,244 876,246 884,249" fill="none" stroke="#4a4cf2" stroke-width="4" stroke-linejoin="round" stroke-linecap="round"/><path d="M851,231 l7,5 l-8,3 z M829,214 l3,6 l-6,0 z" fill="#4a4cf2"/>
<text x="732" y="143" font-family="Liberation Sans,sans-serif" paint-order="stroke" stroke-linejoin="round" font-size="13.8" fill="#fff" stroke="#222" stroke-width="2.2">Вознесенское</text>
<text x="690" y="165.5" font-family="Liberation Sans,sans-serif" paint-order="stroke" stroke-linejoin="round" font-size="11" fill="#fff" stroke="#222" stroke-width="2">Старый Посад</text>
<text x="1026" y="189" font-family="Liberation Sans,sans-serif" paint-order="stroke" stroke-linejoin="round" font-size="11" fill="#fff" stroke="#222" stroke-width="2">Гаревка</text>
<text x="478" y="211" font-family="Liberation Sans,sans-serif" paint-order="stroke" stroke-linejoin="round" font-size="12" font-style="italic" fill="#8fc0ff" stroke="#2a3a55" stroke-width="1" transform="rotate(-21 478 211)">р. Лысьва</text>
<text x="872" y="225" font-family="Liberation Sans,sans-serif" paint-order="stroke" stroke-linejoin="round" font-size="12" font-style="italic" fill="#8fc0ff" stroke="#2a3a55" stroke-width="1" transform="rotate(27 872 225)">р. Побоище</text>
<text x="446" y="99" font-family="Liberation Sans,sans-serif" paint-order="stroke" stroke-linejoin="round" font-size="11.5" fill="#8fc0ff" stroke="#2a3a55" stroke-width="1.2" transform="rotate(72 446 99)">урак</text>
<text x="1326" y="215" font-family="Liberation Sans,sans-serif" font-size="11.5" fill="#fff" opacity=".45" textLength="32" lengthAdjust="spacingAndGlyphs">Yandex</text>
<circle cx="443" cy="118.1" r="12.4" fill="#000" opacity=".3"/><circle cx="443" cy="117.3" r="12" fill="#fff"/><circle cx="443" cy="117.3" r="10.2" fill="url(#pang)"/><path d="M438.5,119.3 L443,114.8 L447.5,119.3" fill="none" stroke="#fff" stroke-width="2.8" stroke-linecap="square" stroke-linejoin="miter"/><circle cx="429.2" cy="145.20000000000002" r="12.4" fill="#000" opacity=".3"/><circle cx="429.2" cy="144.4" r="12" fill="#fff"/><circle cx="429.2" cy="144.4" r="10.2" fill="url(#pang)"/><path d="M431.2,139.9 L426.7,144.4 L431.2,148.9" fill="none" stroke="#fff" stroke-width="2.8" stroke-linecap="square" stroke-linejoin="miter"/><circle cx="456" cy="145.20000000000002" r="12.4" fill="#000" opacity=".3"/><circle cx="456" cy="144.4" r="12" fill="#fff"/><circle cx="456" cy="144.4" r="10.2" fill="url(#pang)"/><path d="M454,139.9 L458.5,144.4 L454,148.9" fill="none" stroke="#fff" stroke-width="2.8" stroke-linecap="square" stroke-linejoin="miter"/><circle cx="443" cy="172.3" r="12.4" fill="#000" opacity=".3"/><circle cx="443" cy="171.5" r="12" fill="#fff"/><circle cx="443" cy="171.5" r="10.2" fill="url(#pang)"/><path d="M438.5,169.5 L443,174.0 L447.5,169.5" fill="none" stroke="#fff" stroke-width="2.8" stroke-linecap="square" stroke-linejoin="miter"/><circle cx="443" cy="204.10000000000002" r="12.4" fill="#000" opacity=".3"/><circle cx="443" cy="203.3" r="12" fill="#fff"/><circle cx="443" cy="203.3" r="10.2" fill="url(#pang)"/><path d="M438,203.3 H448 M443,198.3 V208.3" fill="none" stroke="#fff" stroke-width="3" stroke-linecap="butt"/>
<circle cx="805.8" cy="219.4" r="9.2" fill="#fff"/><circle cx="805.8" cy="219.4" r="8.2" fill="#f2284f"/><text x="805.8" y="222.2" text-anchor="middle" font-family="DejaVu Sans Condensed,Liberation Sans,sans-serif" font-weight="bold" font-size="6" fill="#fff" textLength="12.5" lengthAdjust="spacingAndGlyphs">STOP</text>
<circle cx="820.7" cy="206.2" r="9.4" fill="#fff"/><circle cx="820.7" cy="206.2" r="8.4" fill="#f2284f"/><text x="820.7" y="209" text-anchor="middle" font-family="DejaVu Sans Condensed,Liberation Sans,sans-serif" font-weight="bold" font-size="6.2" fill="#fff" textLength="13" lengthAdjust="spacingAndGlyphs">STOP</text>
<path d="M788,213.5 h11 l5.5,5.5 v11 l-5.5,5.5 h-11 l-5.5,-5.5 v-11 z" fill="#3a3a3a" opacity=".8"/><rect x="784.4" y="215" width="18.4" height="18.4" fill="#fff"/><rect x="785.6" y="216.2" width="16" height="16" fill="#0d5fc2"/><text x="793.8" y="229.6" text-anchor="middle" font-family="Liberation Sans,sans-serif" font-weight="bold" font-size="14" fill="#fff">P</text>
<rect x="787" y="183" width="6" height="8" fill="#fff" stroke="#335" stroke-width=".8"/>
<circle cx="778.4" cy="176.6" r="15.2" fill="#ee3a64"/><circle cx="778.4" cy="176.6" r="14.3" fill="#fff"/>
<g transform="translate(768.4,171.5)"><path d="M0.6,7.2 C0.4,5.4 1.6,4.6 3.4,4 L7,1.6 C8.4,0.6 12,0.4 13.6,1.2 L16,3 C17.8,3.2 19,4 19,5.6 L18.8,7 C18.6,7.8 18,8.2 17,8.2 L13,9.6 L4,9.6 C2,9.4 0.8,8.6 0.6,7.2 Z" fill="#d61a24"/><path d="M6.4,3.6 L8.6,1.8 C10,1 12,1 13.2,1.6 L14.6,3 Z" fill="#3a1012"/><path d="M3.4,4.4 L8,3.8 L15,3.4" stroke="#f2707a" stroke-width=".7" fill="none"/><ellipse cx="6.6" cy="9.2" rx="1.8" ry="1.9" fill="#2a2a2a"/><ellipse cx="6.6" cy="9.2" rx=".8" ry=".9" fill="#aaa"/><ellipse cx="16.6" cy="7.4" rx="1.3" ry="1.6" fill="#2a2a2a"/></g>
<rect x="786" y="158" width="26" height="17.8" rx="8.9" fill="#f7264f"/><text x="799" y="171.4" text-anchor="middle" font-family="DejaVu Sans,Liberation Sans,sans-serif" font-weight="bold" font-size="12" fill="#fff">8</text>
<circle cx="1336" cy="125" r="22" fill="url(#yg0)"/><circle cx="1336" cy="125" r="12.6" fill="#fff"/><path d="M1337.38,113.78 A11.3,11.3 0 0 0 1325.19,128.30 Q1327.47,120.84 1336.43,116.81 A1.6,1.6 0 0 0 1337.38,113.78 Z" fill="#f0284e"/><path d="M1325.93,130.13 A11.3,11.3 0 0 0 1344.78,132.11 Q1337.32,134.40 1328.97,129.22 A1.6,1.6 0 0 0 1325.93,130.13 Z" fill="#f0284e"/><path d="M1345.26,131.48 A11.3,11.3 0 0 0 1338.16,113.91 Q1343.68,119.42 1343.03,129.22 A1.6,1.6 0 0 0 1345.26,131.48 Z" fill="#1f63b8"/>
</svg>
</div>
<div class="win" style="top:248px">
<svg class="tabstrip" width="1366" height="25" viewBox="0 0 1366 25">
<defs><linearGradient id="bbg" x1="0" x2="1" y1="0" y2="0"><stop offset="0" stop-color="#98aee2"/><stop offset="0.012" stop-color="#90a8e0"/><stop offset="0.15" stop-color="#5278c9"/><stop offset="0.86" stop-color="#4f78c9"/><stop offset="0.93" stop-color="#5a82cf"/><stop offset="1" stop-color="#86a5df"/></linearGradient><linearGradient id="bbgv" x1="0" x2="0" y1="0" y2="1"><stop offset="0" stop-color="#3c62b8" stop-opacity=".55"/><stop offset=".25" stop-color="#3c62b8" stop-opacity="0"/><stop offset="1" stop-color="#fff" stop-opacity=".12"/></linearGradient><linearGradient id="bti" gradientUnits="userSpaceOnUse" x1="0" x2="1366" y1="0" y2="0"><stop offset="0" stop-color="#d2d8e5"/><stop offset=".12" stop-color="#c6cfe4"/><stop offset=".2" stop-color="#bbc7e3"/><stop offset=".5" stop-color="#bac7e3"/><stop offset=".6" stop-color="#c2cce5"/><stop offset=".75" stop-color="#b7c5e4"/><stop offset="1" stop-color="#b7c5e4"/></linearGradient><linearGradient id="bta" x1="0" x2="0" y1="0" y2="1"><stop offset="0" stop-color="#ffffff"/><stop offset="1" stop-color="#fbfbfb"/></linearGradient><linearGradient id="bwb" x1="0" x2="0" y1="0" y2="1"><stop offset="0" stop-color="#c3d0ec"/><stop offset=".5" stop-color="#a4b8e2"/><stop offset=".52" stop-color="#7d98d2"/><stop offset="1" stop-color="#9bb3e0"/></linearGradient><linearGradient id="bwc" x1="0" x2="0" y1="0" y2="1"><stop offset="0" stop-color="#e9a79f"/><stop offset=".5" stop-color="#d4685c"/><stop offset=".52" stop-color="#c13a2c"/><stop offset="1" stop-color="#d8705f"/></linearGradient></defs>
<rect width="1366" height="25" fill="url(#bbg)"/><rect width="1366" height="25" fill="url(#bbgv)"/>
<rect y="24" width="1366" height="1" fill="#8e95a6"/>
<path d="M773.0,24 C777.0,24 778.0,22 779.5,19 L784.5,5 C786.0,2.5 787.5,1 790.0,1 L966.0,1 C968.5,1 970.0,2.5 971.5,5 L976.5,19 C978.0,22 979.0,24 983.0,24 Z" fill="url(#bti)" stroke="#8b93a8" stroke-width="1"/>
<path d="M580.25,24 C584.25,24 585.25,22 586.75,19 L591.75,5 C593.25,2.5 594.75,1 597.25,1 L773.25,1 C775.75,1 777.25,2.5 778.75,5 L783.75,19 C785.25,22 786.25,24 790.25,24 Z" fill="url(#bti)" stroke="#8b93a8" stroke-width="1"/>
<path d="M387.5,24 C391.5,24 392.5,22 394.0,19 L399.0,5 C400.5,2.5 402.0,1 404.5,1 L580.5,1 C583.0,1 584.5,2.5 586.0,5 L591.0,19 C592.5,22 593.5,24 597.5,24 Z" fill="url(#bti)" stroke="#8b93a8" stroke-width="1"/>
<path d="M194.75,24 C198.75,24 199.75,22 201.25,19 L206.25,5 C207.75,2.5 209.25,1 211.75,1 L387.75,1 C390.25,1 391.75,2.5 393.25,5 L398.25,19 C399.75,22 400.75,24 404.75,24 Z" fill="url(#bti)" stroke="#8b93a8" stroke-width="1"/>
<path d="M2.0,24 C6.0,24 7.0,22 8.5,19 L13.5,5 C15.0,2.5 16.5,1 19.0,1 L195.0,1 C197.5,1 199.0,2.5 200.5,5 L205.5,19 C207.0,22 208.0,24 212.0,24 Z" fill="url(#bti)" stroke="#8b93a8" stroke-width="1"/>
<path d="M965.75,25 C969.75,25 970.75,23 972.25,20 L977.25,5 C978.75,2.5 980.25,1 982.75,1 L1158.75,1 C1161.25,1 1162.75,2.5 1164.25,5 L1169.25,20 C1170.75,23 1171.75,25 1175.75,25 Z" fill="url(#bta)" stroke="#8a8f9c" stroke-width="1"/>
<rect x="969.75" y="24" width="202" height="1.2" fill="#fbfbfb"/>
<g transform="translate(21.5,5.5)"><path d="M1.5,0.5 H7.5 L10.5,3.5 V13.5 H1.5 Z" fill="none" stroke="#5a5a5a" stroke-width="1.1"/><path d="M7,0.8 V4 H10.2" fill="none" stroke="#5a5a5a" stroke-width="1.1"/></g>
<path d="M186.5,9.5 l7,7 M193.5,9.5 l-7,7" stroke="#6a6f7c" stroke-width="1.7" fill="none"/>
<g transform="translate(212,4)"><path d="M1.6,11.4 C2.6,6.4 4.8,3.4 8,3.4 C11.2,3.4 13.4,6.4 14.4,11.4" fill="none" stroke="#1a66b4" stroke-width="1.5"/><path d="M0.2,12 L2.8,9.6 L3.4,12 Z M15.8,12 L13.200,9.6 L12.600,12 Z" fill="#1a66b4"/><path d="M4.200,12 C3.800,8.200 5.400,5.600 8,5.600 C10.600,5.600 12.200,8.200 11.800,12 L9.200,12 L8.600,10.600 L7.400,10.600 L6.800,12 Z" fill="#1a66b4"/><path d="M5.800,7.700 h4.400" stroke="#c9d2e6" stroke-width="1.100"/><path d="M5.600,9.100 C7,8.700 9,8.700 10.400,9.100" stroke="#c9d2e6" stroke-width=".5" fill="none"/></g>
<path d="M379.25,9.5 l7,7 M386.25,9.5 l-7,7" stroke="#6a6f7c" stroke-width="1.7" fill="none"/>
<g transform="translate(405.3,7.8)"><rect x="0.6" y="0.4" width="13.4" height="10.6" fill="#e9e9ee"/><path d="M3,6.500 L7.300,9.400 L11.600,6.500" fill="none" stroke="#d0d0d8" stroke-width=".8"/><path d="M1.100,11 V1.300 L7.300,6 L13.500,1.300 V11" fill="none" stroke="#d8383a" stroke-width="2" stroke-linejoin="miter"/></g>
<path d="M572.0,9.5 l7,7 M579.0,9.5 l-7,7" stroke="#6a6f7c" stroke-width="1.7" fill="none"/>
<g transform="translate(598.4,5.300)"><defs><linearGradient id="cg597" x1="0" x2="0" y1="0" y2="1"><stop offset="0" stop-color="#adadad"/><stop offset="1" stop-color="#4e4e4e"/></linearGradient><clipPath id="cc597"><rect x="0.500" y="0.500" width="14" height="14" rx="2"/></clipPath></defs><rect x="0" y="0" width="15" height="15" rx="2.600" fill="#f2f2f2" opacity=".8"/><rect x="0.500" y="0.500" width="14" height="14" rx="2" fill="url(#cg597)"/><g clip-path="url(#cc597)"><circle cx="2.400" cy="14" r="3" fill="#c4c4c4"/><circle cx="12.600" cy="14" r="3" fill="#c4c4c4"/><path d="M2.600,10 A5,5 0 0 1 12.400,10" fill="none" stroke="#d6d6d6" stroke-width="1.400"/><circle cx="7.500" cy="9.200" r="4" fill="#5e5e5e"/><circle cx="7.500" cy="9" r="2.200" fill="#7c7c7c"/></g></g>
<path d="M764.75,9.5 l7,7 M771.75,9.5 l-7,7" stroke="#6a6f7c" stroke-width="1.7" fill="none"/>
<g transform="translate(790.9,4.900)"><defs><clipPath id="fc790"><circle cx="8.100" cy="8.100" r="8.100"/></clipPath><radialGradient id="fs790" cx=".5" cy=".35" r=".7"><stop offset=".6" stop-color="#000" stop-opacity="0"/><stop offset="1" stop-color="#000" stop-opacity=".38"/></radialGradient><linearGradient id="fb790" x1="0" x2="0" y1="0" y2="1"><stop offset="0" stop-color="#2fb4c4"/><stop offset="1" stop-color="#16789c"/></linearGradient><linearGradient id="fr790" x1="0" x2="0" y1="0" y2="1"><stop offset="0" stop-color="#e8140a"/><stop offset="1" stop-color="#9c1010"/></linearGradient></defs><g clip-path="url(#fc790)"><rect width="16.200" height="4.600" fill="#ececec"/><rect y="4.600" width="16.200" height="6.300" fill="url(#fb790)"/><rect y="10.900" width="16.200" height="5.400" fill="url(#fr790)"/><rect width="16.200" height="16.200" fill="url(#fs790)"/></g></g>
<path d="M957.5,9.5 l7,7 M964.5,9.5 l-7,7" stroke="#6a6f7c" stroke-width="1.7" fill="none"/>
<g transform="translate(983.9,4.900)"><defs><clipPath id="fc983"><circle cx="8.100" cy="8.100" r="8.100"/></clipPath><radialGradient id="fs983" cx=".5" cy=".35" r=".7"><stop offset=".6" stop-color="#000" stop-opacity="0"/><stop offset="1" stop-color="#000" stop-opacity=".38"/></radialGradient><linearGradient id="fb983" x1="0" x2="0" y1="0" y2="1"><stop offset="0" stop-color="#2fb4c4"/><stop offset="1" stop-color="#16789c"/></linearGradient><linearGradient id="fr983" x1="0" x2="0" y1="0" y2="1"><stop offset="0" stop-color="#e8140a"/><stop offset="1" stop-color="#9c1010"/></linearGradient></defs><g clip-path="url(#fc983)"><rect width="16.200" height="4.600" fill="#ececec"/><rect y="4.600" width="16.200" height="6.300" fill="url(#fb983)"/><rect y="10.900" width="16.200" height="5.400" fill="url(#fr983)"/><rect width="16.200" height="16.200" fill="url(#fs983)"/></g></g>
<path d="M1150.25,9.5 l7,7 M1157.25,9.5 l-7,7" stroke="#4a4a4a" stroke-width="1.7" fill="none"/>
<path d="M1174,6.5 H1196 C1198,6.5 1199,7.5 1200,9.5 L1204,17.5 C1204.5,19 1204,19.5 1202,19.5 H1181 C1179,19.5 1178,18.5 1177,16.5 L1173,8.5 C1172.5,7 1173,6.5 1174,6.5 Z" fill="#c2cde6" stroke="#6d8ac6" stroke-width=".8"/>
<path d="M1229,0 V13 a4,4 0 0 0 4,4 H1249 a4,4 0 0 0 4,-4 V0 Z" fill="url(#bwb)" stroke="#3c5590" stroke-width="1"/>
<path d="M1229.9,0 V13 a3.2,3.2 0 0 0 3.2,3.2 H1248.9 a3.2,3.2 0 0 0 3.2,-3.2 V0" fill="none" stroke="#e4ebfa" stroke-opacity=".8" stroke-width=".8"/>
<circle cx="1241" cy="5.6" r="2.3" fill="#fff" stroke="#4a5a80" stroke-width=".5"/><path d="M1236.6,12 c0,-3.4 2,-4 4.4,-4 s4.4,.6 4.4,4 z" fill="#fff" stroke="#4a5a80" stroke-width=".5"/>
<path d="M1260,0 V13 a4,4 0 0 0 4,4 H1315 V0 Z" fill="url(#bwb)" stroke="#3c5590" stroke-width="1"/>
<path d="M1315,0 V17 H1358 a4,4 0 0 0 4,-4 V0 Z" fill="url(#bwc)" stroke="#5a2a2a" stroke-width="1"/>
<path d="M1260.9,0 V13 a3.2,3.2 0 0 0 3.2,3.2 H1357.9 a3.2,3.2 0 0 0 3.2,-3.2 V0" fill="none" stroke="#eef2fb" stroke-opacity=".75" stroke-width=".8"/>
<path d="M1288,0 V17" stroke="#3c5590" stroke-width="1"/><path d="M1289,0 V16" stroke="#e4ebfa" stroke-opacity=".6" stroke-width="1"/><path d="M1316,0 V16" stroke="#f4d0cc" stroke-opacity=".7" stroke-width="1"/>
<rect x="1269" y="8.5" width="11.5" height="3.6" rx=".8" fill="#fff" stroke="#4a5a80" stroke-width=".6"/>
<rect x="1298.5" y="3" width="8" height="7" fill="none" stroke="#4a5a80" stroke-width="2.6"/><rect x="1298.5" y="3" width="8" height="7" fill="none" stroke="#fff" stroke-width="1.5"/><rect x="1295.5" y="6" width="8" height="7" fill="#8fa8dc" stroke="#4a5a80" stroke-width="2.6"/><rect x="1295.5" y="6" width="8" height="7" fill="#8fa8dc" stroke="#fff" stroke-width="1.5"/>
<path d="M1334.5,4.5 l9,8 M1343.5,4.5 l-9,8" stroke="#5a2020" stroke-width="4" fill="none"/><path d="M1334.5,4.5 l9,8 M1343.5,4.5 l-9,8" stroke="#fff" stroke-width="2.6" fill="none"/>
</svg>
<div class="tt" style="left:39.0px;width:140px">Система мониторинга ва</div>
<div class="tt" style="left:231.8px;width:140px">АгроКонтроль v.2</div>
<div class="tt" style="left:424.5px;width:140px">Входящие (276) - imp.glo</div>
<div class="tt" style="left:617.2px;width:140px">CMS Manager</div>
<div class="tt" style="left:810.0px;width:140px">(5) ГЛОНАСС-Сервис</div>
<div class="tt act" style="left:1002.8px;width:140px">(5) ГЛОНАСС-Сервис</div>
<div class="tbar">
<svg class="navb" width="95" height="36" viewBox="0 0 95 36"><path d="M24.5,17.5 H12.5 M17.5,12 L11.5,17.5 L17.5,23" fill="none" stroke="#505050" stroke-width="2.6" stroke-linecap="round" stroke-linejoin="round"/><path d="M40,17.5 H52 M47,12 L53,17.5 L47,23" fill="none" stroke="#c4c4c4" stroke-width="2.4" stroke-linecap="round" stroke-linejoin="round"/><path d="M80.2,14.2 A6,6 0 1 0 81,20.2" fill="none" stroke="#505050" stroke-width="2.6"/><path d="M82.8,10.6 V17 H76.4 Z" fill="#505050"/></svg>
<div class="url"><svg width="12" height="15" viewBox="0 0 12 15" class="pg"><path d="M1.5,0.5 H7 L10.5,4 V14.5 H1.5 Z" fill="#fdfdfd" stroke="#9a9a9a"/><path d="M7,0.5 V4 H10.5" fill="#e4e4e4" stroke="#9a9a9a"/></svg><span class="ut">monitoring.perm-glonass.ru<span class="ur">/?sid=01375bcc95d308049f9bd347b4669412</span></span><svg class="key" width="10" height="15" viewBox="0 0 12 18"><rect x="1" y="1" width="9.6" height="6.4" rx="1.4" fill="#555"/><rect x="2.2" y="2" width="3" height="1.6" fill="#aaa"/><rect x="5" y="7" width="2.6" height="9.5" fill="#555"/><rect x="5.4" y="7" width="1" height="9" fill="#999"/></svg><svg class="star" width="18.5" height="18.5" viewBox="0 0 20 20"><path d="M10,1.6 L12.5,7.4 L18.8,8 L14,12.2 L15.5,18.4 L10,15.1 L4.5,18.4 L6,12.2 L1.2,8 L7.5,7.4 Z" fill="#fff" stroke="#555" stroke-width="1.5" stroke-linejoin="round"/></svg></div>
<svg class="skype" width="22" height="22" viewBox="0 0 22 22"><circle cx="7" cy="7" r="5.8" fill="#10aeef"/><circle cx="15" cy="15" r="5.8" fill="#10aeef"/><circle cx="11" cy="11" r="8.6" fill="#10aeef"/><text x="11" y="16.2" text-anchor="middle" font-family="Liberation Sans, sans-serif" font-weight="bold" font-size="14.5" fill="#fff">S</text></svg>
<div class="hamb"><i></i><i></i><i></i></div>
</div>
</div>
<div class="app" style="top:310px;height:458px">
<div class="nav">
<div class="logo"><svg width="154" height="29" viewBox="0 0 154 29"><defs><radialGradient id="lg" cx=".4" cy=".35" r=".7"><stop offset="0" stop-color="#7fd4ff"/><stop offset=".6" stop-color="#1597e0"/><stop offset="1" stop-color="#0a6cb8"/></radialGradient></defs><circle cx="15" cy="15.5" r="5.6" fill="url(#lg)"/><text x="15" y="18.4" text-anchor="middle" font-family="Liberation Sans,sans-serif" font-weight="bold" font-size="7" fill="#dff4ff">G</text><g fill="none" stroke="#0b6fc0" stroke-width="1.5" stroke-linecap="round"><path d="M15.2,8 a7.5,7.5 0 0 1 7.3,7"/><path d="M16,5.6 a10,10 0 0 1 9,9"/><path d="M17,3.4 a12.4,12.4 0 0 1 10.2,10.4"/><path d="M14.8,23 a7.5,7.5 0 0 1 -7.3,-7"/><path d="M14,25.4 a10,10 0 0 1 -9,-9"/><path d="M13,27.6 a12.4,12.4 0 0 1 -10.2,-10.4"/></g><text x="30.5" y="16.6" font-family="DejaVu Sans Condensed,DejaVu Sans,Liberation Sans,sans-serif" font-weight="bold" font-size="16" fill="#0b5aa6" stroke="#0b5aa6" stroke-width=".3" textLength="120" lengthAdjust="spacingAndGlyphs">ГЛОНАСС-Сервис</text><text x="38" y="25.6" font-family="Liberation Sans,sans-serif" font-size="5.8" fill="#444" textLength="105" lengthAdjust="spacing">СПУТНИКОВЫЙ МОНИТОРИНГ</text></svg></div>
<div class="ni" style="left:174px;width:109px">
<i class="dot" style="left:5.5px"></i>
<span class="ic" style="left:10.5px"><svg width="18" height="18" viewBox="0 0 18 18"><circle cx="9" cy="9" r="7.6" fill="none" stroke="#c5cbea" stroke-width="1.5"/><path d="M5,3.2 C6.5,4 8.4,3.6 9,5.2 C9.4,6.6 7.4,6.8 6.6,8 C6,9 7,10 6.2,10.6 C5.2,11.2 3.6,9.4 2.4,9.2 C2.6,6.6 3.4,4.6 5,3.2 Z M10.6,9 C12,8.6 13.6,9.4 13.8,10.8 C14,12.4 12.6,14.4 11.2,15.4 C10.6,14 10.8,13 10,12 C9.2,11 9.4,9.4 10.6,9 Z M11.6,2.6 C13,3.2 14.6,4.6 15.4,6.4 C14.2,6.6 13.2,6.2 12.4,5.2 C11.8,4.4 11.2,3.6 11.6,2.6 Z" fill="#c5cbea"/></svg></span>
<span class="lb" style="left:34px;width:68px">Мониторинг</span>
</div>
<div class="ni" style="left:283px;width:109px">
<i class="dot" style="left:4.5px"></i>
<span class="ic" style="left:9.5px"><svg width="18" height="18" viewBox="0 0 18 18"><rect x="1.7" y="1.7" width="14.6" height="14.6" fill="none" stroke="#9fa8da" stroke-width="1.4"/><path d="M1.7,3h14.6" stroke="#9fa8da" stroke-width="2.4"/><path d="M5,8.2h8M5,11.8h8" stroke="#9fa8da" stroke-width="1.4"/></svg></span>
<span class="lb" style="left:34px;width:67px">Сообщения</span>
</div>
<div class="ni act" style="left:392px;width:80px">
<i class="dot" style="left:5.5px"></i>
<span class="ic" style="left:10.5px"><svg width="18" height="18" viewBox="0 0 18 18"><path d="M5.5,2.5 H2.2 V16.3 H15.8 V2.5 H12.5" fill="none" stroke="#fff" stroke-width="1.5"/><rect x="6" y="1" width="6" height="3.2" fill="#fff"/><path d="M5.4,14 V10.4 M9,14 V7 M12.6,14 V9" stroke="#fff" stroke-width="2.2"/></svg></span>
<span class="lb" style="left:33px;width:40px">Отчеты</span>
</div>
<div class="ni" style="left:472px;width:122px">
<span class="ic" style="left:9.5px"><svg width="18" height="18" viewBox="0 0 18 18"><path d="M9,1.4 c2.2,0 3.5,1.6 3.5,3.8 c0,2 -1,3.8 -2.2,4.4 v1.6 l4.4,2 c.8,.4 1,1 1,1.8 v1.4 H2.3 v-1.4 c0,-.8 .2,-1.4 1,-1.8 l4.4,-2 v-1.6 c-1.2,-.6 -2.2,-2.4 -2.2,-4.4 c0,-2.2 1.3,-3.8 3.5,-3.8z" fill="none" stroke="#9fa8da" stroke-width="1.4" stroke-linejoin="round"/></svg></span>
<span class="lb" style="left:34px;width:80px">Пользователи</span>
</div>
<div class="ni" style="left:594px;width:90px">
<span class="ic" style="left:9.5px"><svg width="18" height="18" viewBox="0 0 18 18"><path d="M3,2.600 C3,1.800 3.600,1.200 4.400,1.200 H13.600 C14.400,1.200 15,1.800 15,2.600 V13.400 H3 Z M4.600,3 V8.400 H13.400 V3 Z" fill="#8e98d2" fill-rule="evenodd"/><path d="M3.800,13.400 h2.800 v2.800 h-2.800 z M11.400,13.400 h2.800 v2.800 h-2.800 z" fill="#8e98d2"/><circle cx="5.600" cy="11" r="1" fill="#3f51b5"/><circle cx="12.400" cy="11" r="1" fill="#3f51b5"/><path d="M1.400,5 v3 M16.600,5 v3" stroke="#8e98d2" stroke-width="1.200"/></svg></span>
<span class="lb" style="left:33px;width:50px">Объекты</span>
</div>
<div class="ni" style="left:684px;width:135px">
<span class="ic" style="left:9.5px"><svg width="18" height="18" viewBox="0 0 18 18"><path d="M3,8.400 h8.400 v6.600 h-1.400 v1.600 h-1.600 v-1.600 h-2.400 v1.600 h-1.600 v-1.600 h-1.400 z M4.200,9.600 v2.600 h6 v-2.600 z" fill="#8e98d2" fill-rule="evenodd"/><path d="M10.400,2 h5.600 v5 h-1 v1 h-1.200 v-1 h-1.200 v1 h-1.200 v-1 h-1 z M11.400,3 v1.800 h3.600 v-1.800 z" fill="#8e98d2" fill-rule="evenodd"/><path d="M1,5 V1.600 H4.400 M13.600,17 H17 V13.600" fill="none" stroke="#8e98d2" stroke-width="1"/></svg></span>
<span class="lb" style="left:34px;width:93px">Группы объектов</span>
</div>
<div class="ni" style="left:819px;width:353px">
<span class="ic" style="left:10.5px"><svg width="18" height="18" viewBox="0 0 18 18"><path d="M1.8,1.8 V16.2 H16.2 Z" fill="none" stroke="#8f99d3" stroke-width="1.4" stroke-linejoin="round"/><path d="M4.6,8 V13.4 H10 Z" fill="none" stroke="#8f99d3" stroke-width="1.1"/><path d="M2,5h2M2,8h2M2,11h2M2,14h2" stroke="#8f99d3" stroke-width="1"/></svg></span>
<span class="lb" style="left:34px;width:74px">Инструменты</span>
</div>
<div class="ni" style="left:1172px;width:43px">
<span class="ic" style="left:13.5px"><svg width="14.5" height="14.5" viewBox="0 0 16 16"><circle cx="6.4" cy="6.4" r="4.9" fill="none" stroke="#d5d9f0" stroke-width="1.5"/><path d="M10,10 L14.6,14.6" stroke="#d5d9f0" stroke-width="1.7" stroke-linecap="round"/></svg></span>
</div>
<div class="ni" style="left:1215px;width:30px">
<span class="ic" style="left:13.0px"><svg width="3.4" height="12" viewBox="0 0 4 14"><circle cx="2" cy="2" r="1.3" fill="#e4e7f6"/><circle cx="2" cy="7" r="1.3" fill="#e4e7f6"/><circle cx="2" cy="12" r="1.3" fill="#e4e7f6"/></svg></span>
</div>
<div class="ni" style="left:1245px;width:117px">
<span class="ic" style="left:98.5px"><svg width="10" height="10" viewBox="0 0 11 12"><path d="M4.5,1 H10 V11 H4.5" fill="none" stroke="#d5d9f0" stroke-width="1.3"/><path d="M0,6 H6.5 M4.2,3.6 L6.6,6 L4.2,8.4" fill="none" stroke="#d5d9f0" stroke-width="1.3"/></svg></span>
<span class="lb" style="left:7px;width:85px">Imperia support</span>
</div>
</div>
<div class="panel" style="top:34px;height:213px;width:347px">
<div class="lbl" style="top:10.5px">Шаблон:</div><div class="sel" style="top:13px;width:183px">Отчет для тракторов<b></b></div><svg class="wr" style="top:14.5px" width="16" height="16" viewBox="-9 -9 18 18"><g transform="rotate(-45)"><path d="M-1.5,-4.6 L-3.3,-6.4 V-10 L-1.7,-10.6 L-1.3,-7.9 H1.3 L1.7,-10.6 L3.3,-10 V-6.4 L1.5,-4.6 V4.6 L3.3,6.4 V10 L1.7,10.6 L1.3,7.9 H-1.3 L-1.7,10.6 L-3.3,10 V6.4 L-1.5,4.6 Z" fill="#b5dcf7" stroke="#5a5f66" stroke-width="1" stroke-linejoin="round"/><path d="M-1,-3.4h2M-1,-1.7h2M-1,0h2M-1,1.7h2M-1,3.4h2" stroke="#e6f4fd" stroke-width=".7"/></g></svg>
<div class="lbl" style="top:39.5px">Элемент:</div><div class="sel" style="top:42px;width:183px">Class 5579 EA Погрузчик<b></b></div><svg class="wr" style="top:43.5px" width="16" height="16" viewBox="-9 -9 18 18"><g transform="rotate(-45)"><path d="M-1.5,-4.6 L-3.3,-6.4 V-10 L-1.7,-10.6 L-1.3,-7.9 H1.3 L1.7,-10.6 L3.3,-10 V-6.4 L1.5,-4.6 V4.6 L3.3,6.4 V10 L1.7,10.6 L1.3,7.9 H-1.3 L-1.7,10.6 L-3.3,10 V6.4 L-1.5,4.6 Z" fill="#b5dcf7" stroke="#5a5f66" stroke-width="1" stroke-linejoin="round"/><path d="M-1,-3.4h2M-1,-1.7h2M-1,0h2M-1,1.7h2M-1,3.4h2" stroke="#e6f4fd" stroke-width=".7"/></g></svg>
<div class="bg"><span style="width:77px">Сегодня</span><span style="width:61px">Вчера</span><span style="width:73px">Неделя</span><span style="width:65px">Месяц</span></div>
<div class="lbl" style="top:96.5px">Интервал:</div><div class="sel" style="top:99px;width:185px">Указанный интервал<b></b></div>
<div class="lbl" style="top:124.5px">От:</div><div class="sel inp" style="top:127px;width:185px">2016 Июнь 30 00:00</div>
<div class="lbl" style="top:152.5px">До:</div><div class="sel inp" style="top:155px;width:185px">2016 Июнь 30 23:59</div>
<div class="btn" style="left:152px;top:185.5px;width:61px">Очистить</div><div class="btn" style="left:218.5px;top:185.5px;width:72px">Выполнить</div>
</div>
<div style="position:absolute;left:350px;top:35px;width:750px;height:4px;background:#28322a"></div><div style="position:absolute;left:1364px;top:35px;width:2px;height:300px;background:#a6a6a6"></div>
<div class="ph">Шаблоны отчетов</div>
<div class="ptb"><div class="btn" style="left:5px;top:5px;width:56px;position:absolute">Создать</div><div class="sel" style="left:72px;top:5px;width:100px">Все<b></b></div><div class="sel inp" style="left:184px;top:5px;width:120px;padding-left:21px">тра<svg style="position:absolute;left:4px;top:3px" width="14" height="14" viewBox="0 0 14 14"><circle cx="5.8" cy="5.8" r="4.6" fill="none" stroke="#333" stroke-width="1.2"/><path d="M9,9 L13,13" stroke="#333" stroke-width="1.4"/></svg></div></div>
<div class="pl">
<div class="li" style="top:0px">Отчет для трактора<svg class="wr" style="left:251.5px;top:5.5px" width="16" height="16" viewBox="-9 -9 18 18"><g transform="rotate(-45)"><path d="M-1.5,-4.6 L-3.3,-6.4 V-10 L-1.7,-10.6 L-1.3,-7.9 H1.3 L1.7,-10.6 L3.3,-10 V-6.4 L1.5,-4.6 V4.6 L3.3,6.4 V10 L1.7,10.6 L1.3,7.9 H-1.3 L-1.7,10.6 L-3.3,10 V6.4 L-1.5,4.6 Z" fill="#b5dcf7" stroke="#5a5f66" stroke-width="1" stroke-linejoin="round"/><path d="M-1,-3.4h2M-1,-1.7h2M-1,0h2M-1,1.7h2M-1,3.4h2" stroke="#e6f4fd" stroke-width=".7"/></g></svg></div>
<div class="li" style="top:28px">Отчет для трактора<svg class="wr" style="left:251.5px;top:5.5px" width="16" height="16" viewBox="-9 -9 18 18"><g transform="rotate(-45)"><path d="M-1.5,-4.6 L-3.3,-6.4 V-10 L-1.7,-10.6 L-1.3,-7.9 H1.3 L1.7,-10.6 L3.3,-10 V-6.4 L1.5,-4.6 V4.6 L3.3,6.4 V10 L1.7,10.6 L1.3,7.9 H-1.3 L-1.7,10.6 L-3.3,10 V6.4 L-1.5,4.6 Z" fill="#b5dcf7" stroke="#5a5f66" stroke-width="1" stroke-linejoin="round"/><path d="M-1,-3.4h2M-1,-1.7h2M-1,0h2M-1,1.7h2M-1,3.4h2" stroke="#e6f4fd" stroke-width=".7"/></g></svg></div>
<div class="li" style="top:56px">Отчет для трактора<svg class="wr" style="left:251.5px;top:5.5px" width="16" height="16" viewBox="-9 -9 18 18"><g transform="rotate(-45)"><path d="M-1.5,-4.6 L-3.3,-6.4 V-10 L-1.7,-10.6 L-1.3,-7.9 H1.3 L1.7,-10.6 L3.3,-10 V-6.4 L1.5,-4.6 V4.6 L3.3,6.4 V10 L1.7,10.6 L1.3,7.9 H-1.3 L-1.7,10.6 L-3.3,10 V6.4 L-1.5,4.6 Z" fill="#b5dcf7" stroke="#5a5f66" stroke-width="1" stroke-linejoin="round"/><path d="M-1,-3.4h2M-1,-1.7h2M-1,0h2M-1,1.7h2M-1,3.4h2" stroke="#e6f4fd" stroke-width=".7"/></g></svg></div>
<div class="li" style="top:84px">Отчет для трактора<svg class="wr" style="left:251.5px;top:5.5px" width="16" height="16" viewBox="-9 -9 18 18"><g transform="rotate(-45)"><path d="M-1.5,-4.6 L-3.3,-6.4 V-10 L-1.7,-10.6 L-1.3,-7.9 H1.3 L1.7,-10.6 L3.3,-10 V-6.4 L1.5,-4.6 V4.6 L3.3,6.4 V10 L1.7,10.6 L1.3,7.9 H-1.3 L-1.7,10.6 L-3.3,10 V6.4 L-1.5,4.6 Z" fill="#b5dcf7" stroke="#5a5f66" stroke-width="1" stroke-linejoin="round"/><path d="M-1,-3.4h2M-1,-1.7h2M-1,0h2M-1,1.7h2M-1,3.4h2" stroke="#e6f4fd" stroke-width=".7"/></g></svg></div>
<div class="li" style="top:112px">Отчет для трактора<svg class="wr" style="left:251.5px;top:5.5px" width="16" height="16" viewBox="-9 -9 18 18"><g transform="rotate(-45)"><path d="M-1.5,-4.6 L-3.3,-6.4 V-10 L-1.7,-10.6 L-1.3,-7.9 H1.3 L1.7,-10.6 L3.3,-10 V-6.4 L1.5,-4.6 V4.6 L3.3,6.4 V10 L1.7,10.6 L1.3,7.9 H-1.3 L-1.7,10.6 L-3.3,10 V6.4 L-1.5,4.6 Z" fill="#b5dcf7" stroke="#5a5f66" stroke-width="1" stroke-linejoin="round"/><path d="M-1,-3.4h2M-1,-1.7h2M-1,0h2M-1,1.7h2M-1,3.4h2" stroke="#e6f4fd" stroke-width=".7"/></g></svg></div>
<div class="li" style="top:140px">Отчет для трактора+спецтехника<svg class="wr" style="left:251.5px;top:5.5px" width="16" height="16" viewBox="-9 -9 18 18"><g transform="rotate(-45)"><path d="M-1.5,-4.6 L-3.3,-6.4 V-10 L-1.7,-10.6 L-1.3,-7.9 H1.3 L1.7,-10.6 L3.3,-10 V-6.4 L1.5,-4.6 V4.6 L3.3,6.4 V10 L1.7,10.6 L1.3,7.9 H-1.3 L-1.7,10.6 L-3.3,10 V6.4 L-1.5,4.6 Z" fill="#b5dcf7" stroke="#5a5f66" stroke-width="1" stroke-linejoin="round"/><path d="M-1,-3.4h2M-1,-1.7h2M-1,0h2M-1,1.7h2M-1,3.4h2" stroke="#e6f4fd" stroke-width=".7"/></g></svg></div>
</div>
<div class="ovl"></div>
<div class="gray2"></div>
<svg class="map2" width="266" height="298" viewBox="1098 345 266 298">
<defs><filter id="m2b" x="-5%" y="-5%" width="110%" height="110%"><feGaussianBlur stdDeviation="7"/></filter><radialGradient id="yg1"><stop offset=".55" stop-color="#ddd" stop-opacity=".95"/><stop offset=".8" stop-color="#ddd" stop-opacity=".45"/><stop offset="1" stop-color="#ddd" stop-opacity="0"/></radialGradient><filter id="m2r" x="0" y="0" width="100%" height="100%" color-interpolation-filters="sRGB"><feTurbulence type="turbulence" baseFrequency="0.06 0.07" numOctaves="3" seed="9"/><feColorMatrix type="matrix" values="0 0 0 0 .27  0 0 0 0 .25  0 0 0 0 .19  -2.4 0 0 0 .75"/></filter><filter id="m2n" x="0" y="0" width="100%" height="100%"><feTurbulence type="fractalNoise" baseFrequency="0.11 0.12" numOctaves="3" seed="3"/><feColorMatrix type="matrix" values="0 0 0 0 0  0 0 0 0 0  0 0 0 0 0  1.5 0 0 0 -0.62"/></filter></defs>
<rect x="1098" y="345" width="268" height="298" fill="#2a3329"/>
<g filter="url(#m2b)">
<ellipse cx="1230" cy="400" rx="120" ry="50" fill="#262f25"/>
<ellipse cx="1150" cy="600" rx="70" ry="50" fill="#3a4a37"/>
<ellipse cx="1240" cy="620" rx="60" ry="30" fill="#39463a"/>
<ellipse cx="1330" cy="560" rx="40" ry="50" fill="#2f3d2c"/>
<ellipse cx="1130" cy="480" rx="30" ry="60" fill="#2c3429"/>
<ellipse cx="1320" cy="440" rx="30" ry="60" fill="#313b30" transform="rotate(-35 1320 440)"/>
<ellipse cx="1250" cy="470" rx="70" ry="40" fill="#2d3629"/>
<ellipse cx="1200" cy="520" rx="60" ry="30" fill="#2b3228"/>
</g>
<rect x="1098" y="345" width="268" height="298" fill="#0c1209" filter="url(#m2n)" opacity=".5"/><rect x="1098" y="345" width="268" height="230" fill="#5a4a38" filter="url(#m2r)" opacity=".55"/>
<path d="M1098,500 C1130,505 1160,520 1178,560" fill="none" stroke="#4a5a44" stroke-width="1.5" opacity=".6"/>
<path d="M1098,636 l4,-2 l3,-6 l4,1 l2,5 l5,2 l4,-3 M1190,640 l8,-3 l8,-4 l10,-2" fill="none" stroke="#cfd4cc" stroke-width="1" opacity=".8"/>
<circle cx="1336" cy="373" r="22" fill="url(#yg1)"/><circle cx="1336" cy="373" r="12.6" fill="#dcdcdc"/><path d="M1337.38,361.78 A11.3,11.3 0 0 0 1325.19,376.30 Q1327.47,368.84 1336.43,364.81 A1.6,1.6 0 0 0 1337.38,361.78 Z" fill="#b82a44"/><path d="M1325.93,378.13 A11.3,11.3 0 0 0 1344.78,380.11 Q1337.32,382.40 1328.97,377.22 A1.6,1.6 0 0 0 1325.93,378.13 Z" fill="#b82a44"/><path d="M1345.26,379.48 A11.3,11.3 0 0 0 1338.16,361.91 Q1343.68,367.42 1343.03,377.22 A1.6,1.6 0 0 0 1345.26,379.48 Z" fill="#234f8c"/>
<path d="M1256.5,573.2 L1274.7,577.8 L1267.4,581.4 L1267.9,587.3 Z" fill="#12a512" stroke="#0a3a0a" stroke-width=".9" stroke-linejoin="round"/>
<g><path d="M1270,598.4 h8 v4.2 h-8 z" fill="#20336e"/><path d="M1277.4,580 l12,1 l8.6,2.6 l1,6 v11 l-1.4,1.6 h-20.2 z" fill="#1f47a8"/><path d="M1277.4,580 l12,1 l8.6,2.600 l.2,1.200 l-20.8,-2.400 z" fill="#2d59c0"/><path d="M1284.800,584.2 l12.600,1.200 l.6,4.600 l-13.200,-.6 z" fill="#0c1220"/><rect x="1294.600" y="585.800" width="2.600" height="3" fill="#d8dde8"/><path d="M1287,593.200 h11.600 v2 h-11.600 z" fill="#8f98a8"/><path d="M1289,596.400 h9.800 v4 h-9.800 z" fill="#141a2c"/><rect x="1285.800" y="597" width="1.800" height="2.400" fill="#e8e8c8"/><path d="M1281.600,584.200 h2.200 v5.200 h-2.200 z" fill="#16244a"/><ellipse cx="1281" cy="600.600" rx="2.500" ry="3.100" fill="#14161c"/><ellipse cx="1281" cy="600.600" rx="1.100" ry="1.500" fill="#8a8a90"/><ellipse cx="1271.600" cy="600.800" rx="1.700" ry="2.300" fill="#14161c"/><ellipse cx="1293.500" cy="602" rx="1.800" ry="1.200" fill="#14161c"/></g>
<text x="1285" y="619.4" text-anchor="middle" font-family="DejaVu Sans,Liberation Sans,sans-serif" font-weight="bold" font-size="12" fill="#c40c16" stroke="#eab0b0" stroke-opacity=".6" stroke-width="2" paint-order="stroke" textLength="76.5" lengthAdjust="spacingAndGlyphs">Daf р001ср</text>
<rect x="1212" y="629" width="154" height="14" fill="#c8ccc8" opacity=".5"/>
<text x="1217" y="639.4" font-family="Liberation Sans,sans-serif" font-size="10" fill="#2a2a2a" textLength="141" lengthAdjust="spacingAndGlyphs">Сообщить об ошибке на карте</text>
</svg>
<div class="dlg">
<svg width="0" height="0" style="position:absolute"><defs><linearGradient id="arg" x1="0" x2="0" y1="0" y2="1"><stop offset="0" stop-color="#55b2ec"/><stop offset="1" stop-color="#1b6cb0"/></linearGradient></defs></svg>
<div class="dt">Свойства шаблона отчета – Отчет для тракторов<svg class="dx" width="10" height="10" viewBox="0 0 10 10"><path d="M1,1 L9,9 M9,1 L1,9" stroke="#333" stroke-width="1.3"/></svg></div>
<div class="db">
<div class="fs fs1"><span class="lg">Свойства таблицы</span><span class="fl" style="left:4px">Имя:</span><span class="fi">Статистика</span><span class="fl" style="left:192px">Тип:</span><span class="fsel">Статистика<b></b></span></div>
<div class="fs fs2"><span class="lg">Доступные столбцы</span>
<div class="tbl">
<div class="rw" style="top:0px"><svg class="ar" width="12" height="20" viewBox="0 0 12 20"><path d="M6,1 L10.6,6.4 H6.9 V13.1 H10.6 L6,18.5 L1.4,13.1 H5.1 V6.4 H1.4 Z" fill="url(#arg)"/></svg><span class="ck"><svg width="9" height="9" viewBox="0 0 9 9"><path d="M1,4.6 L3.4,7.2 L8,1.4" fill="none" stroke="#2a2a2a" stroke-width="2.2"/></svg></span><span class="c1">Отчет</span><span class="c2">Статистика</span><span class="ib"><i></i></span></div>
<div class="rw alt" style="top:29px"><svg class="ar" width="12" height="20" viewBox="0 0 12 20"><path d="M6,1 L10.6,6.4 H6.9 V13.1 H10.6 L6,18.5 L1.4,13.1 H5.1 V6.4 H1.4 Z" fill="url(#arg)"/></svg><span class="ck"><svg width="9" height="9" viewBox="0 0 9 9"><path d="M1,4.6 L3.4,7.2 L8,1.4" fill="none" stroke="#2a2a2a" stroke-width="2.2"/></svg></span><span class="c1">Объект</span><span class="c2">Статистика</span><span class="ib"><i></i></span></div>
<div class="rw" style="top:58px"><svg class="ar" width="12" height="20" viewBox="0 0 12 20"><path d="M6,1 L10.6,6.4 H6.9 V13.1 H10.6 L6,18.5 L1.4,13.1 H5.1 V6.4 H1.4 Z" fill="url(#arg)"/></svg><span class="ck"><svg width="9" height="9" viewBox="0 0 9 9"><path d="M1,4.6 L3.4,7.2 L8,1.4" fill="none" stroke="#2a2a2a" stroke-width="2.2"/></svg></span><span class="c1">Начало интервала</span><span class="c2">Статистика</span><span class="ib"><i></i></span></div>
<div class="rw alt" style="top:87px"><svg class="ar" width="12" height="20" viewBox="0 0 12 20"><path d="M6,1 L10.6,6.4 H6.9 V13.1 H10.6 L6,18.5 L1.4,13.1 H5.1 V6.4 H1.4 Z" fill="url(#arg)"/></svg><span class="ck"><svg width="9" height="9" viewBox="0 0 9 9"><path d="M1,4.6 L3.4,7.2 L8,1.4" fill="none" stroke="#2a2a2a" stroke-width="2.2"/></svg></span><span class="c1">Окончание интервала</span><span class="c2">Статистика</span><span class="ib hl"><i></i></span></div>
<div class="rw" style="top:116px"><svg class="ar" width="12" height="20" viewBox="0 0 12 20"><path d="M6,1 L10.6,6.4 H6.9 V13.1 H10.6 L6,18.5 L1.4,13.1 H5.1 V6.4 H1.4 Z" fill="url(#arg)"/></svg><span class="ck"><svg width="9" height="9" viewBox="0 0 9 9"><path d="M1,4.6 L3.4,7.2 L8,1.4" fill="none" stroke="#2a2a2a" stroke-width="2.2"/></svg></span><span class="c1">Пробег в поездках</span><span class="c2">Поездки</span><span class="ib"><i></i></span></div>
<div class="rw alt" style="top:145px"><svg class="ar" width="12" height="20" viewBox="0 0 12 20"><path d="M6,1 L10.6,6.4 H6.9 V13.1 H10.6 L6,18.5 L1.4,13.1 H5.1 V6.4 H1.4 Z" fill="url(#arg)"/></svg><span class="ck"><svg width="9" height="9" viewBox="0 0 9 9"><path d="M1,4.6 L3.4,7.2 L8,1.4" fill="none" stroke="#2a2a2a" stroke-width="2.2"/></svg></span><span class="c1">Моточасы</span><span class="c2">Моточасы</span><span class="ib"><i></i></span></div>
<div class="rw" style="top:174px"><svg class="ar" width="12" height="20" viewBox="0 0 12 20"><path d="M6,1 L10.6,6.4 H6.9 V13.1 H10.6 L6,18.5 L1.4,13.1 H5.1 V6.4 H1.4 Z" fill="url(#arg)"/></svg><span class="ck"><svg width="9" height="9" viewBox="0 0 9 9"><path d="M1,4.6 L3.4,7.2 L8,1.4" fill="none" stroke="#2a2a2a" stroke-width="2.2"/></svg></span><span class="c1">Ср. расход в м/ч</span><span class="c2">Моточасы</span><span class="ib hl"><i></i></span></div>
<div class="rw alt" style="top:203px"><svg class="ar" width="12" height="20" viewBox="0 0 12 20"><path d="M6,1 L10.6,6.4 H6.9 V13.1 H10.6 L6,18.5 L1.4,13.1 H5.1 V6.4 H1.4 Z" fill="url(#arg)"/></svg><span class="ck"><svg width="9" height="9" viewBox="0 0 9 9"><path d="M1,4.6 L3.4,7.2 L8,1.4" fill="none" stroke="#2a2a2a" stroke-width="2.2"/></svg></span><span class="c1">Время в движении</span><span class="c2">Поездки</span><span class="ib"><i></i></span></div>
<div class="rw" style="top:232px"><svg class="ar" width="12" height="20" viewBox="0 0 12 20"><path d="M6,1 L10.6,6.4 H6.9 V13.1 H10.6 L6,18.5 L1.4,13.1 H5.1 V6.4 H1.4 Z" fill="url(#arg)"/></svg><span class="ck"><svg width="9" height="9" viewBox="0 0 9 9"><path d="M1,4.6 L3.4,7.2 L8,1.4" fill="none" stroke="#2a2a2a" stroke-width="2.2"/></svg></span><span class="c1">Потрачено по ДИРТ в поездках</span><span class="c2">Поездки</span><span class="ib"><i></i></span></div>
<div class="rw alt" style="top:261px"><svg class="ar" width="12" height="20" viewBox="0 0 12 20"><path d="M6,1 L10.6,6.4 H6.9 V13.1 H10.6 L6,18.5 L1.4,13.1 H5.1 V6.4 H1.4 Z" fill="url(#arg)"/></svg><span class="ck"><svg width="9" height="9" viewBox="0 0 9 9"><path d="M1,4.6 L3.4,7.2 L8,1.4" fill="none" stroke="#2a2a2a" stroke-width="2.2"/></svg></span><span class="c1">Ср. расход по ДИРТ в м/ч в поездках</span><span class="c2">Моточасы</span><span class="ib"><i></i></span></div>
<div class="rw" style="top:290px"><svg class="ar" width="12" height="20" viewBox="0 0 12 20"><path d="M6,1 L10.6,6.4 H6.9 V13.1 H10.6 L6,18.5 L1.4,13.1 H5.1 V6.4 H1.4 Z" fill="url(#arg)"/></svg><span class="ck"><svg width="9" height="9" viewBox="0 0 9 9"><path d="M1,4.6 L3.4,7.2 L8,1.4" fill="none" stroke="#2a2a2a" stroke-width="2.2"/></svg></span><span class="c1">Потрачено по ДИРТ</span><span class="c2">Статистика</span><span class="ib"><i></i></span></div>
</div>
<div class="sb"><i class="up"></i><i class="th"></i></div>
</div>
</div>
<svg class="ann" width="829" height="420" viewBox="268 348 829 420"><defs><filter id="rb"><feGaussianBlur stdDeviation=".5"/></filter></defs><path d="M289,742 C320,741 360,743.5 400,742 C450,740.5 500,742.5 540,741.5 C560,741 580,742 590,741.5" fill="none" stroke="#ee2536" stroke-width="4.6" stroke-linecap="round" filter="url(#rb)"/><path d="M868,728 C868,720 880,717.5 905,717.5 C940,717 962,719 962,730 C962,740 945,742 915,742 C885,742 868,740 868,728 Z" fill="none" stroke="#ee2536" stroke-width="4" filter="url(#rb)"/></svg>
</div>
</div>
</body></html>
